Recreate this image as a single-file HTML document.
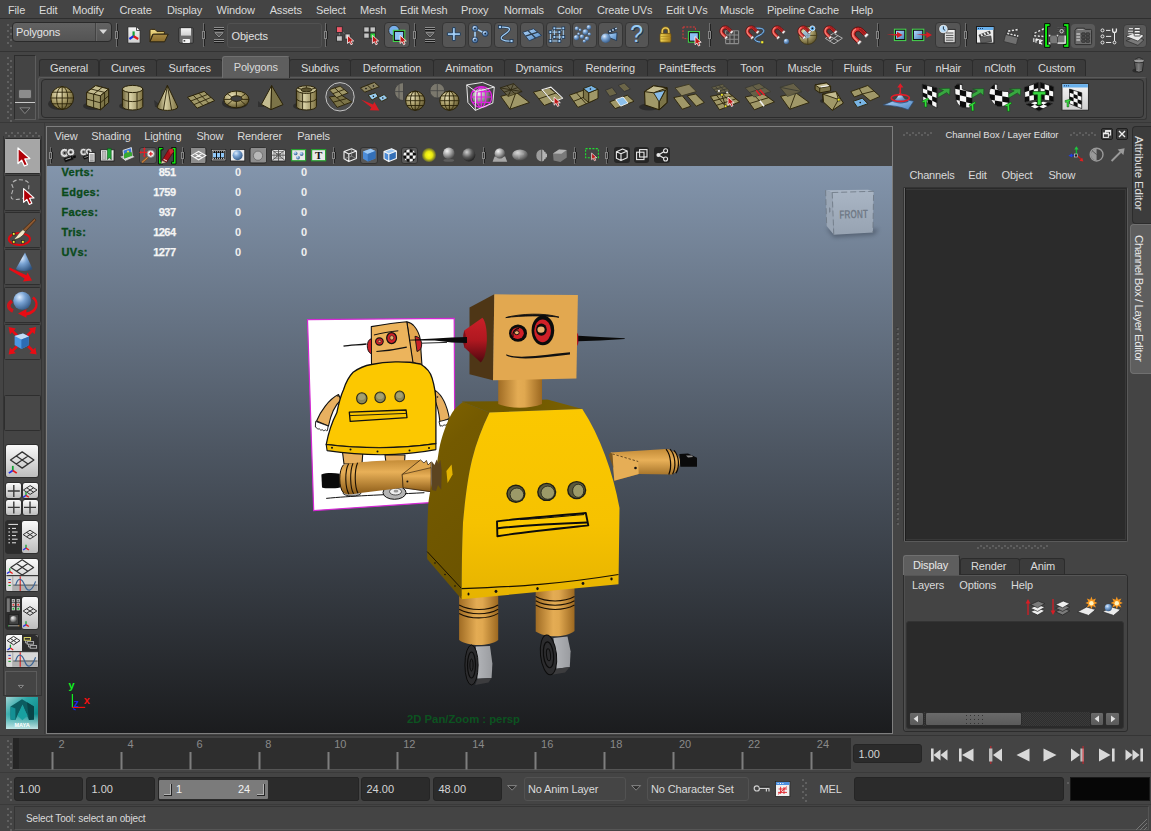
<!DOCTYPE html>
<html><head><meta charset="utf-8">
<style>
*{box-sizing:border-box;margin:0;padding:0}
html,body{width:1151px;height:831px;overflow:hidden;background:#444;font-family:"Liberation Sans",sans-serif;font-size:11px;color:#d8d8d8}
.a{position:absolute}
.t{position:absolute;white-space:nowrap;color:#dadada;font-size:11px;line-height:13px;letter-spacing:-0.15px}
.fld{position:absolute;background:#2b2b2b;border:1px solid #252525;border-radius:3px;color:#d4d4d4;font-size:11px;line-height:13px;white-space:nowrap}
.tab{position:absolute;top:59px;height:17px;background:#3b3b3b;border:1px solid #2c2c2c;border-bottom:none;border-radius:3px 3px 0 0;color:#dadada;font-size:11px;line-height:13px;text-align:center;padding-top:3px;letter-spacing:-0.15px}
.btn{position:absolute;background:#515151;border-radius:3px;border:1px solid #3a3a3a}
.hud{position:absolute;font-weight:bold;font-size:11px;line-height:12px;white-space:nowrap}
svg{position:absolute;overflow:visible}
</style></head>
<body>
<!-- menubar -->
<div class="a" style="left:0;top:0;width:1151px;height:19px;background:#444;border-bottom:1px solid #2e2e2e"></div>
<div class="t" style="left:8px;top:4px">File</div>
<div class="t" style="left:39px;top:4px">Edit</div>
<div class="t" style="left:72.3px;top:4px">Modify</div>
<div class="t" style="left:119.5px;top:4px">Create</div>
<div class="t" style="left:167px;top:4px">Display</div>
<div class="t" style="left:216.5px;top:4px">Window</div>
<div class="t" style="left:269.7px;top:4px">Assets</div>
<div class="t" style="left:316px;top:4px">Select</div>
<div class="t" style="left:360px;top:4px">Mesh</div>
<div class="t" style="left:400px;top:4px">Edit Mesh</div>
<div class="t" style="left:461px;top:4px">Proxy</div>
<div class="t" style="left:504px;top:4px">Normals</div>
<div class="t" style="left:557px;top:4px">Color</div>
<div class="t" style="left:597px;top:4px">Create UVs</div>
<div class="t" style="left:666px;top:4px">Edit UVs</div>
<div class="t" style="left:720px;top:4px">Muscle</div>
<div class="t" style="left:767px;top:4px">Pipeline Cache</div>
<div class="t" style="left:851px;top:4px">Help</div>

<!-- status -->
<div class="a" style="left:0;top:51px;width:1151px;height:1px;background:#333"></div>
<div class="a" style="left:7px;top:24px;width:2px;height:2px;background:#606060"></div><div class="a" style="left:10px;top:27px;width:2px;height:2px;background:#606060"></div><div class="a" style="left:7px;top:30px;width:2px;height:2px;background:#606060"></div><div class="a" style="left:10px;top:33px;width:2px;height:2px;background:#606060"></div><div class="a" style="left:7px;top:36px;width:2px;height:2px;background:#606060"></div><div class="a" style="left:10px;top:39px;width:2px;height:2px;background:#606060"></div><div class="a" style="left:7px;top:42px;width:2px;height:2px;background:#606060"></div><div class="a" style="left:10px;top:45px;width:2px;height:2px;background:#606060"></div>
<div class="a" style="left:12px;top:22px;width:100px;height:20px;border:1px solid #2a2a2a;border-radius:4px;background:linear-gradient(#626262,#545454)"></div>
<div class="a" style="left:95px;top:23px;width:1px;height:18px;background:#424242"></div>
<div class="a" style="left:96px;top:23px;width:1px;height:18px;background:#686868"></div>
<svg style="left:99px;top:29px" width="9" height="6"><path d="M0.3,0.5 L8.2,0.5 L4.25,5 Z" fill="#d8d8d8"/></svg>
<div class="t" style="left:16px;top:25.5px;color:#e4e4e4">Polygons</div>
<div class="a" style="left:116px;top:23px;width:1px;height:24px;background:#6e6e6e"></div><div class="a" style="left:117px;top:24px;width:1px;height:22px;background:#222"></div><div class="a" style="left:115px;top:31px;width:4px;height:8px;background:#1e1e1e"></div><div class="a" style="left:115px;top:31px;width:3px;height:8px;border:1px solid #858585;background:#3a3a3a"></div>
<div class="a" style="left:203px;top:23px;width:1px;height:24px;background:#6e6e6e"></div><div class="a" style="left:204px;top:24px;width:1px;height:22px;background:#222"></div><div class="a" style="left:202px;top:31px;width:4px;height:8px;background:#1e1e1e"></div><div class="a" style="left:202px;top:31px;width:3px;height:8px;border:1px solid #858585;background:#3a3a3a"></div>
<div class="a" style="left:325px;top:23px;width:1px;height:24px;background:#6e6e6e"></div><div class="a" style="left:326px;top:24px;width:1px;height:22px;background:#222"></div><div class="a" style="left:324px;top:31px;width:4px;height:8px;background:#1e1e1e"></div><div class="a" style="left:324px;top:31px;width:3px;height:8px;border:1px solid #858585;background:#3a3a3a"></div>
<div class="a" style="left:414px;top:23px;width:1px;height:24px;background:#6e6e6e"></div><div class="a" style="left:415px;top:24px;width:1px;height:22px;background:#222"></div><div class="a" style="left:413px;top:31px;width:4px;height:8px;background:#1e1e1e"></div><div class="a" style="left:413px;top:31px;width:3px;height:8px;border:1px solid #858585;background:#3a3a3a"></div>
<div class="a" style="left:709px;top:23px;width:1px;height:24px;background:#6e6e6e"></div><div class="a" style="left:710px;top:24px;width:1px;height:22px;background:#222"></div><div class="a" style="left:708px;top:31px;width:4px;height:8px;background:#1e1e1e"></div><div class="a" style="left:708px;top:31px;width:3px;height:8px;border:1px solid #858585;background:#3a3a3a"></div>
<div class="a" style="left:877px;top:23px;width:1px;height:24px;background:#6e6e6e"></div><div class="a" style="left:878px;top:24px;width:1px;height:22px;background:#222"></div><div class="a" style="left:876px;top:31px;width:4px;height:8px;background:#1e1e1e"></div><div class="a" style="left:876px;top:31px;width:3px;height:8px;border:1px solid #858585;background:#3a3a3a"></div>
<div class="a" style="left:965px;top:23px;width:1px;height:24px;background:#6e6e6e"></div><div class="a" style="left:966px;top:24px;width:1px;height:22px;background:#222"></div><div class="a" style="left:964px;top:31px;width:4px;height:8px;background:#1e1e1e"></div><div class="a" style="left:964px;top:31px;width:3px;height:8px;border:1px solid #858585;background:#3a3a3a"></div>
<svg width="0" height="0" style="left:0;top:0"><defs>
<linearGradient id="gPage" x1="0" y1="0" x2="0" y2="1"><stop offset="0" stop-color="#f4f4f4"/><stop offset="1" stop-color="#d0d0d0"/></linearGradient>
<linearGradient id="gFold" x1="0" y1="0" x2="0" y2="1"><stop offset="0" stop-color="#f0dc88"/><stop offset="1" stop-color="#c8a84c"/></linearGradient>
<linearGradient id="gFold2" x1="0" y1="0" x2="0" y2="1"><stop offset="0" stop-color="#a88a44"/><stop offset="1" stop-color="#8a6c2c"/></linearGradient>
<radialGradient id="gBall" cx="0.35" cy="0.3" r="0.8"><stop offset="0" stop-color="#dcecff"/><stop offset="0.4" stop-color="#7aa4d4"/><stop offset="1" stop-color="#2c507c"/></radialGradient>
<radialGradient id="gGrey" cx="0.35" cy="0.3" r="0.8"><stop offset="0" stop-color="#f4f4f4"/><stop offset="0.5" stop-color="#9a9a9a"/><stop offset="1" stop-color="#3a3a3a"/></radialGradient>
<radialGradient id="gDark" cx="0.35" cy="0.3" r="0.8"><stop offset="0" stop-color="#d0d0d0"/><stop offset="0.5" stop-color="#5a5a5a"/><stop offset="1" stop-color="#161616"/></radialGradient>
<radialGradient id="gTan" cx="0.35" cy="0.3" r="0.8"><stop offset="0" stop-color="#e8e0b8"/><stop offset="0.5" stop-color="#a89c68"/><stop offset="1" stop-color="#544a24"/></radialGradient>
<linearGradient id="gTanL" x1="0" y1="0" x2="1" y2="0"><stop offset="0" stop-color="#6c6238"/><stop offset="0.4" stop-color="#d8d0a4"/><stop offset="1" stop-color="#7c7040"/></linearGradient>
<linearGradient id="gTanT" x1="0" y1="0" x2="1" y2="1"><stop offset="0" stop-color="#d0c894"/><stop offset="1" stop-color="#7c7040"/></linearGradient>
<linearGradient id="gBlueL" x1="0" y1="0" x2="1" y2="1"><stop offset="0" stop-color="#b4d8fc"/><stop offset="1" stop-color="#4c84c0"/></linearGradient>
<linearGradient id="gYel" x1="0" y1="0" x2="1" y2="0"><stop offset="0" stop-color="#f8dc58"/><stop offset="1" stop-color="#a87c18"/></linearGradient>
<g id="cur" transform="scale(0.86)"><path d="M0,0 L0,9.5 L2.3,7.4 L4,11 L5.8,10.2 L4.2,6.8 L7.2,6.6 Z" fill="#c01818" stroke="#fff" stroke-width="0.9" stroke-linejoin="round"/></g>
<g id="magnet"><g transform="translate(6.2,6.2) rotate(-45)"><path d="M-5.4,5.6 L-5.4,0 A5.4,5.4 0 0 1 5.4,0 L5.4,5.6 L2.3,5.6 L2.3,0 A2.3,2.3 0 0 0 -2.3,0 L-2.3,5.6 Z" fill="#d83030" stroke="#5c0c0c" stroke-width="0.7"/><path d="M-4.2,4 L-4.2,0 A4.2,4.2 0 0 1 1.5,-3.9" fill="none" stroke="#ff9c8c" stroke-width="1.3" opacity="0.75"/><path d="M3,-2.2 A3.8,3.8 0 0 1 3.9,0 L3.9,4" fill="none" stroke="#7c1010" stroke-width="1.6" opacity="0.6"/><path d="M-5.4,4.2 H-2.3 V6.2 H-5.4Z M5.4,4.2 H2.3 V6.2 H5.4Z" fill="#f4f4f4" stroke="#666" stroke-width="0.5"/></g></g>
<g id="clap"><path d="M1,7 L15,4 L15.6,7 L1.8,10.2Z" fill="#444" stroke="#222" stroke-width="0.6"/><path d="M3,6.6 l2,-0.4 l1,2.6 l-2,0.5z M7,5.7 l2,-0.4 l1,2.6 l-2,0.5z M11,4.9 l2,-0.4 l1,2.6 l-2,0.5z" fill="#e8e8e8"/><path d="M2,10.2 L15.6,10.2 L15.6,17.5 L2,17.5Z" fill="#5c5c5c" stroke="#222" stroke-width="0.7"/></g>
</defs></svg>
<svg style="left:127px;top:26px" width="14" height="18" viewBox="0 0 14 18"><path d="M0.8,0.8 L9.5,0.8 L13.2,4.5 L13.2,17.2 L0.8,17.2 Z" fill="url(#gPage)" stroke="#2a2a2a" stroke-width="1"/><path d="M9.5,0.8 L9.5,4.5 L13.2,4.5Z" fill="#fff" stroke="#2a2a2a" stroke-width="0.8"/><path d="M6.6,10.2 L6.6,5.4" stroke="#18a038" stroke-width="2.2"/><path d="M6.6,10.2 L2.4,13" stroke="#1830e0" stroke-width="2.2"/><path d="M6.6,10.2 L11.2,13" stroke="#e01818" stroke-width="2.2"/></svg>
<svg style="left:149px;top:28px" width="20" height="15" viewBox="0 0 20 15"><path d="M1,13.6 L1,2.6 Q1,1.4 2.2,1.4 L6,1.4 L8,3.6 L15.4,3.6 L15.4,6 L3.5,6.4 Z" fill="url(#gFold)" stroke="#3a2c10" stroke-width="1"/><path d="M1,13.8 L4.2,6.2 L19.2,6.2 L15.6,13.8 Z" fill="url(#gFold2)" stroke="#2c2410" stroke-width="1"/></svg>
<svg style="left:178px;top:27px" width="16" height="17" viewBox="0 0 16 17"><path d="M1.6,0.8 L14.4,0.8 Q15.2,0.8 15.2,1.6 L15.2,15.4 Q15.2,16.2 14.4,16.2 L2.4,16.2 L0.8,14.6 L0.8,1.6 Q0.8,0.8 1.6,0.8Z" fill="#6a6a6a" stroke="#2a2a2a" stroke-width="1"/><rect x="3" y="1.2" width="10" height="7.4" fill="url(#gPage)"/><rect x="4.6" y="12" width="7.4" height="4" rx="0.8" fill="#f0f0f0"/><rect x="5.6" y="13" width="1.6" height="1.6" fill="#444"/></svg>
<svg style="left:213px;top:26px" width="12" height="18" viewBox="0 0 12 18"><path d="M1,1.5H11M1,3.5H11M1,13.5H11M1,15.5H11" stroke="#8c8c8c" stroke-width="1"/><path d="M1,2.5H11M1,4.5H11M1,14.5H11M1,16.5H11" stroke="#1c1c1c" stroke-width="1"/><path d="M0.4,6 L11.6,6 L6,12Z" fill="#222"/><path d="M1.8,6.6 L10.2,6.6 L6,11Z" fill="#585858" stroke="#9a9a9a" stroke-width="0.9"/></svg>
<svg style="left:424px;top:26px" width="12" height="18" viewBox="0 0 12 18"><path d="M1,1.5H11M1,3.5H11M1,13.5H11M1,15.5H11" stroke="#8c8c8c" stroke-width="1"/><path d="M1,2.5H11M1,4.5H11M1,14.5H11M1,16.5H11" stroke="#1c1c1c" stroke-width="1"/><path d="M0.4,6 L11.6,6 L6,12Z" fill="#222"/><path d="M1.8,6.6 L10.2,6.6 L6,11Z" fill="#585858" stroke="#9a9a9a" stroke-width="0.9"/></svg>
<div class="a" style="left:227px;top:23px;width:95px;height:25px;border:1px solid #515151;border-radius:3px;background:#454545"></div>
<div class="t" style="left:231.5px;top:30px;color:#e0e0e0">Objects</div>
<svg style="left:335px;top:25px" width="20" height="21" viewBox="0 0 20 21"><path d="M4.4,7 V11 M7,6.5 L11,10" stroke="#777" stroke-width="1"/><rect x="1.5" y="1.7" width="5.8" height="5.8" fill="#f05868" stroke="#2a2a2a" stroke-width="0.9"/><rect x="1.5" y="10.8" width="5.8" height="5.4" fill="#c4c4c4" stroke="#2a2a2a" stroke-width="0.9"/><rect x="10" y="8.9" width="5.2" height="5.2" fill="#c4c4c4" stroke="#2a2a2a" stroke-width="0.9"/><use href="#cur" x="12.5" y="10.3"/></svg>
<svg style="left:363px;top:25px" width="20" height="21" viewBox="0 0 20 21"><rect x="0.8" y="1.9" width="5.4" height="5.2" fill="#c4c4c4" stroke="#2a2a2a" stroke-width="0.9"/><rect x="7" y="1.9" width="5.4" height="5.2" fill="#c4c4c4" stroke="#2a2a2a" stroke-width="0.9"/><rect x="0.8" y="8" width="5.4" height="5.2" fill="#c4c4c4" stroke="#2a2a2a" stroke-width="0.9"/><rect x="7" y="8" width="5.4" height="5.2" fill="#30d040" stroke="#2a2a2a" stroke-width="0.9"/><use href="#cur" x="9.4" y="10.3"/></svg>
<div class="a" style="left:384px;top:22px;width:26px;height:26px;border:1px solid #343434;border-radius:4px;background:#555"></div>
<svg style="left:384px;top:22px" width="26" height="26" viewBox="0 0 26 26"><circle cx="10" cy="8.6" r="5.3" fill="#78b0ec" stroke="#2a2a2a" stroke-width="0.9"/><rect x="9.3" y="8.3" width="11.5" height="11.2" fill="#141414" stroke="#40d848" stroke-width="1"/><rect x="11" y="10" width="8.1" height="7.8" fill="#8cc0f4"/><use href="#cur" x="16.1" y="13.3"/></svg>
<div class="a" style="left:441.8px;top:22.4px;width:24.4px;height:25.2px;border:1px solid #363636;border-radius:4px;background:#555"></div>
<div class="a" style="left:467.9px;top:22.4px;width:24.4px;height:25.2px;border:1px solid #363636;border-radius:4px;background:#555"></div>
<div class="a" style="left:494px;top:22.4px;width:24.4px;height:25.2px;border:1px solid #363636;border-radius:4px;background:#555"></div>
<div class="a" style="left:520.1px;top:22.4px;width:24.4px;height:25.2px;border:1px solid #363636;border-radius:4px;background:#555"></div>
<div class="a" style="left:546.2px;top:22.4px;width:24.4px;height:25.2px;border:1px solid #363636;border-radius:4px;background:#555"></div>
<div class="a" style="left:572.3px;top:22.4px;width:24.4px;height:25.2px;border:1px solid #363636;border-radius:4px;background:#555"></div>
<div class="a" style="left:598.4px;top:22.4px;width:24.4px;height:25.2px;border:1px solid #363636;border-radius:4px;background:#555"></div>
<div class="a" style="left:624.5px;top:22.4px;width:24.4px;height:25.2px;border:1px solid #363636;border-radius:4px;background:#555"></div>
<svg style="left:441.8px;top:22.4px" width="24.4" height="25.2" viewBox="0 0 24.4 25.2"><path d="M10.6,5.6h2.6v5.2h5.2v2.6h-5.2v5.2h-2.6v-5.2h-5.2v-2.6h5.2z" fill="#a4d0f8" stroke="#1c3450" stroke-width="0.9"/></svg>
<svg style="left:467.9px;top:22.4px" width="24.4" height="25.2" viewBox="0 0 24.4 25.2"><path d="M7,6.4V18M7,6.4L17.2,11.5" stroke="#a4d0f8" stroke-width="1.6"/><circle cx="7" cy="6.4" r="3" fill="url(#gBall)" stroke="#1c3450" stroke-width="0.7"/><circle cx="17.2" cy="11.5" r="3" fill="url(#gBall)" stroke="#1c3450" stroke-width="0.7"/><circle cx="7" cy="17.9" r="3" fill="url(#gBall)" stroke="#1c3450" stroke-width="0.7"/><circle cx="7" cy="6.4" r="0.9" fill="#123"/><circle cx="17.2" cy="11.5" r="0.9" fill="#123"/><circle cx="7" cy="17.9" r="0.9" fill="#123"/></svg>
<svg style="left:494px;top:22.4px" width="24.4" height="25.2" viewBox="0 0 24.4 25.2"><path d="M6,5.2 C22,4 14,10.5 9,13.5 C4,17 10,19.5 17.2,19.2" fill="none" stroke="#1c3450" stroke-width="2.4"/><path d="M6,5.2 C22,4 14,10.5 9,13.5 C4,17 10,19.5 17.2,19.2" fill="none" stroke="#a4d0f8" stroke-width="1.2"/><rect x="4.4" y="3.6" width="3" height="3" fill="#a4d0f8" stroke="#1c3450" stroke-width="0.8"/><rect x="16" y="17.6" width="3" height="3" fill="#a4d0f8" stroke="#1c3450" stroke-width="0.8"/></svg>
<svg style="left:520.1px;top:22.4px" width="24.4" height="25.2" viewBox="0 0 24.4 25.2"><path d="M2.6,10.4 L13.6,6.8 L21.6,13.4 L9.2,18.8Z" fill="url(#gBlueL)" stroke="#1c3450" stroke-width="0.8"/><path d="M8,8.6 L15.6,16 M5.6,14.2 L17.8,10.2" stroke="#2c3c4c" stroke-width="1.3"/></svg>
<svg style="left:546.2px;top:22.4px" width="24.4" height="25.2" viewBox="0 0 24.4 25.2"><path d="M8.4,6.3H17.3V15H8.4ZM4.4,10.1H13.4V19H4.4ZM4.4,10.1L8.4,6.3M13.4,10.1L17.3,6.3M13.4,19L17.3,15M4.4,19L8.4,15" fill="none" stroke="#a4d0f8" stroke-width="1"/><rect x="7" y="4.9" width="2.8" height="2.8" fill="#a4d0f8" stroke="#1c3450" stroke-width="0.8"/><rect x="15.9" y="4.9" width="2.8" height="2.8" fill="#a4d0f8" stroke="#1c3450" stroke-width="0.8"/><rect x="3" y="8.7" width="2.8" height="2.8" fill="#a4d0f8" stroke="#1c3450" stroke-width="0.8"/><rect x="12" y="8.7" width="2.8" height="2.8" fill="#a4d0f8" stroke="#1c3450" stroke-width="0.8"/><rect x="7" y="13.6" width="2.8" height="2.8" fill="#a4d0f8" stroke="#1c3450" stroke-width="0.8"/><rect x="15.9" y="13.6" width="2.8" height="2.8" fill="#a4d0f8" stroke="#1c3450" stroke-width="0.8"/><rect x="3" y="17.6" width="2.8" height="2.8" fill="#a4d0f8" stroke="#1c3450" stroke-width="0.8"/><rect x="12" y="17.6" width="2.8" height="2.8" fill="#a4d0f8" stroke="#1c3450" stroke-width="0.8"/></svg>
<svg style="left:572.3px;top:22.4px" width="24.4" height="25.2" viewBox="0 0 24.4 25.2"><circle cx="4.8" cy="6.6" r="2" fill="url(#gBall)"/><circle cx="16.9" cy="5.4" r="2.3" fill="url(#gBall)"/><circle cx="8.2" cy="8" r="1.4" fill="url(#gBall)"/><circle cx="13.4" cy="10" r="2.8" fill="url(#gBall)"/><circle cx="6.6" cy="12" r="1.4" fill="url(#gBall)"/><circle cx="17.4" cy="12.2" r="1.6" fill="url(#gBall)"/><circle cx="4.4" cy="15.6" r="2.6" fill="url(#gBall)"/><circle cx="10" cy="14.6" r="2.2" fill="url(#gBall)"/><circle cx="15" cy="16.6" r="2.2" fill="url(#gBall)"/><circle cx="12.4" cy="19.2" r="1.6" fill="url(#gBall)"/></svg>
<svg style="left:598.4px;top:22.4px" width="24.4" height="25.2" viewBox="0 0 24.4 25.2"><path d="M9.6,9 L18.4,5 L19.4,7.6 L10.6,11.6Z" fill="#1c3450"/><path d="M11,8.9l1.4,-0.6l0.6,1.4l-1.4,0.6z M14,7.6l1.4,-0.6l0.6,1.4l-1.4,0.6z M17,6.2l1.4,-0.6l0.6,1.4l-1.4,0.6z" fill="#d8ecff"/><path d="M10.4,12 L19,10.6 L18.6,18.6 L11,15.6Z" fill="url(#gBlueL)" stroke="#1c3450" stroke-width="0.8"/><circle cx="7.8" cy="16.2" r="4.8" fill="url(#gBall)"/></svg>
<div class="a" style="left:624.5px;top:22px;width:24.4px;text-align:center;font-weight:normal;font-size:23px;line-height:25px;color:#98ccf4;text-shadow:1px 1px 0 #1c3450">?</div>
<svg style="left:659px;top:26px" width="13" height="17" viewBox="0 0 13 17"><path d="M3.2,8 V5.2 A3.3,3.3 0 0 1 9.8,5.2 V8" fill="none" stroke="#8c6c14" stroke-width="2.6"/><path d="M3.2,8 V5.2 A3.3,3.3 0 0 1 9.8,5.2 V8" fill="none" stroke="#f0d060" stroke-width="1.2"/><rect x="1" y="7.6" width="11" height="8.6" rx="1" fill="url(#gYel)" stroke="#6c5010" stroke-width="0.8"/><path d="M1.6,10.4H11.6M1.6,13H11.6" stroke="#a88420" stroke-width="0.7"/></svg>
<svg style="left:682px;top:25px" width="21" height="21" viewBox="0 0 21 21"><rect x="1" y="2" width="12.4" height="11.6" fill="none" stroke="#e03838" stroke-width="1" stroke-dasharray="2 1.3"/><rect x="6.4" y="6.6" width="11" height="10.6" fill="#141414" stroke="#40d848" stroke-width="1"/><rect x="8" y="8.2" width="7.8" height="7.4" fill="#8cc0f4"/><use href="#cur" x="13" y="11.6"/></svg>
<svg style="left:718.9px;top:25.3px" width="22" height="22" viewBox="0 0 22 22"><path d="M6.6,5.7H19.6M6.6,10H19.6M6.6,14.3H19.6M6.6,18.6H19.6M6.6,5.7V18.6M10.9,5.7V18.6M15.2,5.7V18.6M19.6,5.7V18.6" stroke="#8c8c8c" stroke-width="1.1" fill="none"/><use href="#magnet"/></svg>
<svg style="left:745px;top:25.3px" width="22" height="22" viewBox="0 0 22 22"><path d="M10,3.4 C22,2 20,8 14,10.5 C8,13 8,16.5 16.6,17.2" fill="none" stroke="#2c5078" stroke-width="2"/><path d="M10,3.4 C22,2 20,8 14,10.5 C8,13 8,16.5 16.6,17.2" fill="none" stroke="#8cc4f4" stroke-width="1"/><rect x="15.8" y="15.8" width="3" height="3" fill="#f4ec30" stroke="#333" stroke-width="0.7"/><use href="#magnet"/></svg>
<svg style="left:770.8px;top:25.3px" width="22" height="22" viewBox="0 0 22 22"><circle cx="15.4" cy="16.4" r="2.6" fill="url(#gBall)"/><use href="#magnet"/></svg>
<svg style="left:796.9px;top:25.3px" width="22" height="22" viewBox="0 0 22 22"><circle cx="10.8" cy="10.4" r="9" fill="url(#gTan)" stroke="#3c3414" stroke-width="0.8"/><path d="M1.8,10.4H19.8M10.8,1.4V19.4" stroke="#3c3414" stroke-width="0.8"/><circle cx="9.6" cy="9.6" r="3.8" fill="#8cb4d8" opacity="0.8"/><circle cx="15.4" cy="3.4" r="2.5" fill="#58b0f4" stroke="#e8f4ff" stroke-width="0.8"/><circle cx="15.4" cy="3.4" r="0.9" fill="#111"/><use href="#magnet"/></svg>
<svg style="left:822.9px;top:25.3px" width="22" height="22" viewBox="0 0 22 22"><path d="M2.4,13.4 L10.6,8.2 L19.4,13.2 L11,18.8Z M6.4,10.8L15.2,16 M6.6,16.2L15,10.6" fill="none" stroke="#b0b0b0" stroke-width="1"/><use href="#magnet"/></svg>
<svg style="left:850px;top:25.5px" width="22" height="22" viewBox="0 0 22 22"><use href="#magnet" transform="scale(1.3)"/></svg>
<svg style="left:886px;top:28px" width="22" height="14" viewBox="0 0 22 14"><rect x="8.4" y="1.2" width="11.4" height="11.4" fill="#141414" stroke="#48d850" stroke-width="1"/><rect x="10" y="2.8" width="8.2" height="8.2" fill="url(#gBlueL)"/><path d="M0.6,6.6 L11,6.1 L11,3.8 L16.6,6.9 L11,10 L11,7.7Z" fill="#d81c24"/></svg>
<svg style="left:911px;top:28px" width="22" height="14" viewBox="0 0 22 14"><rect x="1.4" y="1.2" width="11.4" height="11.4" fill="#141414" stroke="#48d850" stroke-width="1"/><rect x="3" y="2.8" width="8.2" height="8.2" fill="url(#gBlueL)"/><path d="M5,6.6 L15.4,6.1 L15.4,3.8 L21,6.9 L15.4,10 L15.4,7.7Z" fill="#d81c24"/></svg>
<div class="a" style="left:935.4px;top:22.4px;width:25.3px;height:25.2px;border:1px solid #363636;border-radius:4px;background:#555"></div>
<svg style="left:935.4px;top:22.4px" width="25.3" height="25.2" viewBox="0 0 25.3 25.2"><rect x="9.2" y="7.4" width="11" height="13.4" fill="url(#gPage)" stroke="#222" stroke-width="0.9"/><path d="M11,11H18.4M11,13.4H18.4M11,15.8H18.4M11,18.2H18.4" stroke="#444" stroke-width="0.9"/><circle cx="8.4" cy="7" r="4" fill="#b8dcf8" stroke="#e8e8e8" stroke-width="1"/><circle cx="8.4" cy="7" r="4.6" fill="none" stroke="#333" stroke-width="0.5"/><path d="M8.4,4.4V7.2L10.2,8.4" stroke="#123" stroke-width="0.9" fill="none"/></svg>
<svg style="left:976.4px;top:26px" width="18.4" height="17.6" viewBox="0 0 18.4 17.6"><rect x="0.5" y="0.5" width="17.4" height="16.6" fill="#ececec" stroke="#1c1c1c" stroke-width="1"/><rect x="1" y="1" width="16.4" height="3" fill="#68b0ec"/><path d="M2,2.5h1M4,2.5h1M6,2.5h1" stroke="#1c3c6c" stroke-width="1"/><g transform="translate(2.4,2.6) scale(0.8) rotate(-8 8 10)"><use href="#clap"/></g></svg>
<svg style="left:1003px;top:23px" width="20" height="22" viewBox="0 0 20 22"><g transform="translate(1.5,2.5) rotate(14 8 10)"><path d="M0.5,6.5 L12.6,1.4 L13.6,3.6 L1.4,8.8Z" fill="#3a3a3a"/><path d="M2.4,6 l2,-0.85 l0.7,1.5 l-2,0.85z M5.8,4.6 l2,-0.85 l0.7,1.5 l-2,0.85z M9.2,3.2 l2,-0.85 l0.7,1.5 l-2,0.85z" fill="#e4e4e4"/><path d="M1,8 H14 V10.6 H1Z" fill="#3a3a3a"/><path d="M2.4,8.4h2v1.7h-2z M5.8,8.4h2v1.7h-2z M9.2,8.4h2v1.7h-2z M12.4,8.4h1.4v1.7h-1.4z" fill="#e4e4e4"/><path d="M1,10.6 H14 V18 H1Z" fill="#707070" stroke="#333" stroke-width="0.7"/></g></svg>
<svg style="left:1031px;top:25px" width="14" height="20" viewBox="0 0 14 20"><path d="M1.4,7.8 L12.6,2.4 L13,4.6 L1.8,10Z" fill="#3a3a3a"/><path d="M3.4,7.4l2,-0.95l0.4,1.4l-2,0.95z M7,5.7l2,-0.95l0.4,1.4l-2,0.95z M10.6,4l2,-0.95l0.4,1.4l-2,0.95z" fill="#e4e4e4"/><path d="M1.6,9.6 L13,10.6 V12.8 L1.6,11.8Z" fill="#3a3a3a"/><path d="M3.2,10l2,.2v1.5l-2,-.2z M6.8,10.3l2,.2v1.5l-2,-.2z M10.4,10.6l2,.2v1.5l-2,-.2z" fill="#e4e4e4"/><path d="M1.4,12 L13,14 V20.6 L1,17.4Z" fill="#4a4a4a"/><path d="M2.8,13.2V17M5,13.8V17.8M5,13.8L7.2,14.6L5,15.8M8.6,14.8V19M8.6,14.8L11,15.6L8.6,17L11.2,19.4" stroke="#f0f0f0" stroke-width="1.1" fill="none"/></svg>
<svg style="left:1044.2px;top:23.4px" width="6.6" height="25" viewBox="0 0 6.6 25"><path d="M0.6,0.6 H6 V3.4 H3.5 V21.6 H6 V24.4 H0.6Z" fill="#10f010" stroke="#0a0a0a" stroke-width="1"/></svg>
<svg style="left:1063.4px;top:23.4px" width="6.6" height="25" viewBox="0 0 6.6 25"><path d="M0.6,0.6 H6 V3.4 H3.5 V21.6 H6 V24.4 H0.6Z" fill="#10f010" stroke="#0a0a0a" stroke-width="1" transform="translate(6.6,0) scale(-1,1)"/></svg>
<svg style="left:1048px;top:26px" width="19" height="20" viewBox="0 0 19 20"><rect x="9.6" y="1.6" width="8" height="7.6" fill="#3a3a3a"/><path d="M9.6,1.6h8M9.6,3.5h8M9.6,5.4h8M9.6,7.3h8" stroke="#666" stroke-width="0.9" stroke-dasharray="1 1"/><circle cx="13.6" cy="5.2" r="1.7" fill="none" stroke="#e0e0e0" stroke-width="0.9"/><rect x="1.6" y="9.6" width="15.6" height="7.6" fill="#787878"/><path d="M9.5,9.6V17.2" stroke="#444" stroke-width="1"/><path d="M17.2,9.6V17.2H9.5" stroke="#f4f4f4" stroke-width="1.2" fill="none"/><path d="M1.6,9.6V17.2" stroke="#333" stroke-width="1"/><rect x="0.4" y="8.4" width="2.4" height="2.4" fill="#ddd" stroke="#444" stroke-width="0.6"/><rect x="8.3" y="8.4" width="2.4" height="2.4" fill="#ddd" stroke="#444" stroke-width="0.6"/><rect x="0.4" y="16" width="2.4" height="2.4" fill="#ddd" stroke="#444" stroke-width="0.6"/></svg>
<div class="a" style="left:1070.9px;top:23.6px;width:24.5px;height:24.3px;border-radius:4px;background:#5a5a5a"></div>
<svg style="left:1070.9px;top:23.6px" width="24.5" height="24.3" viewBox="0 0 24.5 24.3"><path d="M4,6.4 L5.6,4.2 H13.4 L14.4,5.4 H19.6 Q20.6,5.4 20.6,6.4 V19.6 Q20.6,20.6 19.6,20.6 H5 Q4,20.6 4,19.6Z" fill="#6e6e6e" stroke="#2e2e2e" stroke-width="1"/><path d="M6.4,5.4H12.6" stroke="#aaa" stroke-width="1"/><path d="M5.4,10H9M5.4,13H9M5.4,16H9" stroke="#e8e8e8" stroke-width="1.1"/><g fill="#4a4a4a" stroke="#2e2e2e" stroke-width="0.7"><rect x="10.6" y="8.8" width="3.6" height="2.8" rx="0.6"/><rect x="15" y="8.8" width="3.6" height="2.8" rx="0.6"/><rect x="10.6" y="12.2" width="3.6" height="2.8" rx="0.6"/><rect x="15" y="12.2" width="3.6" height="2.8" rx="0.6"/><rect x="10.6" y="15.6" width="3.6" height="2.8" rx="0.6"/><rect x="15" y="15.6" width="3.6" height="2.8" rx="0.6"/></g></svg>
<svg style="left:1099px;top:26px" width="20" height="20" viewBox="0 0 20 20"><g fill="none" stroke="#e8e8e8" stroke-width="1"><circle cx="3.5" cy="4.4" r="1.5"/><circle cx="3.5" cy="10.4" r="1.5"/><circle cx="3.5" cy="16.5" r="1.5"/><path d="M7,4.4H11.4M7,10.4H12.2M7,16.5H12.2"/><path d="M15.5,15V6.4"/><circle cx="15.5" cy="16.5" r="1.4"/><path d="M13.6,2.4 V4.6 A1.9,1.9 0 0 0 17.4,4.6 V2.4" stroke-width="1.3"/></g></svg>
<div class="a" style="left:1122.7px;top:23.6px;width:24.6px;height:24.3px;border-radius:4px;background:#5a5a5a;border:1px solid #3c3c3c"></div>
<svg style="left:1122.7px;top:23.6px" width="24.6" height="24.3" viewBox="0 0 24.6 24.3"><path d="M3,16.6 L13.4,12.4 L21,15.8 L15,21.4Z" fill="#7a7a7a" stroke="#2e2e2e" stroke-width="0.8"/><path d="M3,12.4 L13.4,8 L21,11.6 L15,17.2Z" fill="#e8e8e8" stroke="#2e2e2e" stroke-width="0.8"/><path d="M6,4.6H10M5,7.2H10M5.4,9.8H10M4.4,12.4H10" stroke="#e8e8e8" stroke-width="1"/><g fill="#f4f4f4" stroke="#2a2a2a" stroke-width="0.8"><rect x="11.2" y="3.4" width="6" height="2.6" rx="0.6"/><rect x="11.2" y="6.4" width="6" height="2.6" rx="0.6"/><rect x="11.2" y="9.4" width="6" height="2.6" rx="0.6"/></g></svg>

<!-- shelf -->
<div class="a" style="left:7px;top:57px;width:2px;height:2px;background:#606060"></div>
<div class="a" style="left:10px;top:60px;width:2px;height:2px;background:#606060"></div>
<div class="a" style="left:7px;top:63px;width:2px;height:2px;background:#606060"></div>
<div class="a" style="left:10px;top:66px;width:2px;height:2px;background:#606060"></div>
<div class="a" style="left:7px;top:69px;width:2px;height:2px;background:#606060"></div>
<div class="a" style="left:10px;top:72px;width:2px;height:2px;background:#606060"></div>
<div class="a" style="left:7px;top:75px;width:2px;height:2px;background:#606060"></div>
<div class="a" style="left:10px;top:78px;width:2px;height:2px;background:#606060"></div>
<div class="a" style="left:7px;top:81px;width:2px;height:2px;background:#606060"></div>
<div class="a" style="left:10px;top:84px;width:2px;height:2px;background:#606060"></div>
<div class="a" style="left:7px;top:87px;width:2px;height:2px;background:#606060"></div>
<div class="a" style="left:10px;top:90px;width:2px;height:2px;background:#606060"></div>
<div class="a" style="left:7px;top:93px;width:2px;height:2px;background:#606060"></div>
<div class="a" style="left:10px;top:96px;width:2px;height:2px;background:#606060"></div>
<div class="a" style="left:7px;top:99px;width:2px;height:2px;background:#606060"></div>
<div class="a" style="left:10px;top:102px;width:2px;height:2px;background:#606060"></div>
<div class="a" style="left:7px;top:105px;width:2px;height:2px;background:#606060"></div>
<div class="a" style="left:10px;top:108px;width:2px;height:2px;background:#606060"></div>
<div class="a" style="left:7px;top:111px;width:2px;height:2px;background:#606060"></div>
<div class="a" style="left:10px;top:114px;width:2px;height:2px;background:#606060"></div>
<div class="a" style="left:7px;top:117px;width:2px;height:2px;background:#606060"></div>
<div class="a" style="left:10px;top:120px;width:2px;height:2px;background:#606060"></div>
<div class="a" style="left:14px;top:55px;width:22px;height:65px;border:1px solid #2c2c2c;border-right-color:#5e5e5e;border-bottom-color:#5e5e5e;background:#444"></div>
<div class="a" style="left:18px;top:89px;width:14px;height:10px;border-radius:2px;background:#8c8c8c;border:1px solid #4a4a4a"></div>
<div class="a" style="left:15px;top:102px;width:20px;height:1px;background:#c8c8c8"></div>
<svg style="left:19px;top:107px" width="12" height="8"><path d="M0.8,0.8 L11,0.8 L5.9,6.6Z" fill="#3c3c3c" stroke="#8a8a8a" stroke-width="0.9"/></svg>
<div class="tab" style="padding-top:2px;left:38.6px;width:60.9px">General</div>
<div class="tab" style="padding-top:2px;left:98.5px;width:58.9px">Curves</div>
<div class="tab" style="padding-top:2px;left:156.4px;width:66.6px">Surfaces</div>
<div class="tab" style="padding-top:2px;left:222px;width:67.5px;top:56px;height:22px;background:#5e5e5e;border-color:#707070 #2e2e2e #5e5e5e #707070;padding-top:4px;z-index:2">Polygons</div>
<div class="tab" style="padding-top:2px;left:289px;width:62px">Subdivs</div>
<div class="tab" style="padding-top:2px;left:350px;width:84px">Deformation</div>
<div class="tab" style="padding-top:2px;left:433px;width:72px">Animation</div>
<div class="tab" style="padding-top:2px;left:504px;width:70px">Dynamics</div>
<div class="tab" style="padding-top:2px;left:573px;width:74.5px">Rendering</div>
<div class="tab" style="padding-top:2px;left:646.5px;width:81.5px">PaintEffects</div>
<div class="tab" style="padding-top:2px;left:727px;width:50px">Toon</div>
<div class="tab" style="padding-top:2px;left:776px;width:57px">Muscle</div>
<div class="tab" style="padding-top:2px;left:832px;width:51.5px">Fluids</div>
<div class="tab" style="padding-top:2px;left:882.5px;width:42px">Fur</div>
<div class="tab" style="padding-top:2px;left:923.5px;width:49.5px">nHair</div>
<div class="tab" style="padding-top:2px;left:972px;width:56px">nCloth</div>
<div class="tab" style="padding-top:2px;left:1027px;width:59px">Custom</div>
<div class="a" style="left:38px;top:77px;width:1109px;height:43px;border:1px solid #5a5a5a;border-right-color:#353535;border-bottom-color:#353535;border-radius:3px;background:#484848"></div>
<div class="a" style="left:41px;top:79px;width:1103px;height:39px;border:1px solid #2c2c2c;border-radius:4px;background:#444"></div>
<svg style="left:1132px;top:56px" width="14" height="17" viewBox="0 0 14 17"><ellipse cx="5.4" cy="14.6" rx="5" ry="2" fill="#222" opacity="0.7"/><path d="M2.6,5.6 L3.6,15.2 Q7,16.6 10.4,15.2 L11.4,5.6Z" fill="url(#gTrash)" stroke="#1c1c1c" stroke-width="0.8"/><path d="M5,7V14.6M7,7V15M9,7V14.6" stroke="#3a3a3a" stroke-width="0.9"/><ellipse cx="7" cy="4.8" rx="5.4" ry="2" fill="#9c9c9c" stroke="#1c1c1c" stroke-width="0.8"/><path d="M5.2,3 Q7,1 8.8,3" fill="none" stroke="#1c1c1c" stroke-width="1.6"/><path d="M5.2,3 Q7,1.2 8.8,3" fill="none" stroke="#8a8a8a" stroke-width="0.7"/><defs><linearGradient id="gTrash" x1="0" y1="0" x2="1" y2="0"><stop offset="0" stop-color="#5a5a5a"/><stop offset="0.45" stop-color="#b4b4b4"/><stop offset="1" stop-color="#5a5a5a"/></linearGradient></defs></svg>
<svg style="left:45.8px;top:82px" width="32" height="32" viewBox="0 0 32 32"><ellipse cx="13" cy="22" rx="11" ry="6" fill="#262626" opacity="0.75"/><circle cx="16.2" cy="16" r="11.4" fill="url(#gTan)" stroke="#2a2208" stroke-width="1"/><path d="M16.2,4.6V27.4M4.8,16H27.6M6.4,10.2H26M6.4,21.8H26" stroke="#2a2208" stroke-width="0.9" fill="none"/><ellipse cx="16.2" cy="16" rx="5.6" ry="11.4" fill="none" stroke="#2a2208" stroke-width="0.9"/></svg>
<svg style="left:80.7px;top:82px" width="32" height="32" viewBox="0 0 32 32"><ellipse cx="12" cy="24" rx="10" ry="4" fill="#262626" opacity="0.75"/><path d="M5.6,10.4 L14.6,3.6 L27.6,7 L27.6,20.6 L19.4,27.8 L5.6,23.6Z" fill="#a09868" stroke="#2a2208" stroke-width="1"/><path d="M5.6,10.4 L14.6,3.6 L27.6,7 L19.4,13.8Z" fill="#c4bc90" stroke="#2a2208" stroke-width="1"/><path d="M19.4,13.8 L27.6,7 L27.6,20.6 L19.4,27.8Z" fill="#7c7448" stroke="#2a2208" stroke-width="1"/><path d="M10,7L23.6,10.4M12.6,12.2L21.2,5.4M12.6,12.2V25.8M5.6,17L19.4,20.8L27.6,13.8M23.6,10.4V24.2" stroke="#2a2208" stroke-width="0.9" fill="none"/></svg>
<svg style="left:115.6px;top:82px" width="32" height="32" viewBox="0 0 32 32"><ellipse cx="13" cy="24" rx="10" ry="4" fill="#262626" opacity="0.75"/><path d="M6.4,7 V24.4 A10.2,3.6 0 0 0 26.8,24.4 V7Z" fill="url(#gTanL)" stroke="#2a2208" stroke-width="1"/><ellipse cx="16.6" cy="7" rx="10.2" ry="3.6" fill="#c4bc90" stroke="#2a2208" stroke-width="1"/><path d="M6.4,16 A10.2,3.6 0 0 0 26.8,16M12.4,10.2V27.6M21,10.2V27.6" stroke="#2a2208" stroke-width="0.9" fill="none"/></svg>
<svg style="left:150.5px;top:82px" width="32" height="32" viewBox="0 0 32 32"><path d="M3,18 L12,25 L4,25Z" fill="#2a2a2a" opacity="0.7"/><path d="M16.4,3.4 L26.8,25 A10.4,3.4 0 0 1 6,25Z" fill="url(#gTanL)" stroke="#2a2208" stroke-width="1"/><path d="M16.4,3.4 L12.4,28M16.4,3.4L20.6,28" stroke="#2a2208" stroke-width="0.9" fill="none"/></svg>
<svg style="left:185.4px;top:82px" width="32" height="32" viewBox="0 0 32 32"><path d="M2.6,15.2 L19.2,9.4 L29.6,18.6 L12.2,26.2Z" fill="#a09868" stroke="#2a2208" stroke-width="1"/><path d="M8.2,13.2L18,23.6M13.8,11.2L23.8,21.2M5.8,19L22.6,12.4M9,22.6L26,15.4" stroke="#2a2208" stroke-width="0.9"/></svg>
<svg style="left:220.3px;top:82px" width="32" height="32" viewBox="0 0 32 32"><ellipse cx="15" cy="21" rx="13" ry="6" fill="#262626" opacity="0.75"/><ellipse cx="16.4" cy="17.4" rx="12.6" ry="8.4" fill="url(#gTan)" stroke="#2a2208" stroke-width="1"/><ellipse cx="16.4" cy="16.6" rx="5.6" ry="2.8" fill="#3f3f3f" stroke="#2a2208" stroke-width="1"/><path d="M16.4,9V13.8M16.4,19.4V25.8M3.8,17.4H10.8M22,17.4H29M7,11.6L11.8,15M25.8,11.6L21,15M7,23.2L12,18.6M25.8,23.2L20.8,18.6" stroke="#2a2208" stroke-width="0.9"/></svg>
<svg style="left:255.2px;top:82px" width="32" height="32" viewBox="0 0 32 32"><path d="M3,19 L10,25 L3,25Z" fill="#2a2a2a" opacity="0.7"/><path d="M16.6,3.6 L6.4,22.4 L16,27.6Z" fill="#c4bc90" stroke="#2a2208" stroke-width="1"/><path d="M16.6,3.6 L16,27.6 L28,22.6Z" fill="#7c7448" stroke="#2a2208" stroke-width="1"/></svg>
<svg style="left:290.1px;top:82px" width="32" height="32" viewBox="0 0 32 32"><ellipse cx="13" cy="24" rx="10" ry="4" fill="#262626" opacity="0.75"/><path d="M6.4,7.6 V24.4 A10,3.6 0 0 0 26.4,24.4 V7.6Z" fill="url(#gTanL)" stroke="#2a2208" stroke-width="1"/><ellipse cx="16.4" cy="7.6" rx="10" ry="3.8" fill="#c4bc90" stroke="#2a2208" stroke-width="1"/><ellipse cx="16.4" cy="7.8" rx="5.4" ry="2" fill="#5a5230" stroke="#2a2208" stroke-width="0.9"/><path d="M6.4,16.4 A10,3.6 0 0 0 26.4,16.4M12.4,10.6V27.8M20.6,10.6V27.8M16.4,3.8V5.8M7.6,6.2L11.6,7.2M25.2,6.2L21.2,7.2" stroke="#2a2208" stroke-width="0.9" fill="none"/></svg>
<svg style="left:325px;top:82px" width="32" height="32" viewBox="0 0 32 32"><circle cx="15" cy="14.8" r="14.2" fill="#4c4c4c" stroke="#c4c4c4" stroke-width="1"/><path d="M4.3,15 L16.5,13.2 L26.8,19.9 L12.2,25.4Z" fill="#7c7448" stroke="#2a2208" stroke-width="0.9" stroke-linejoin="round"/><path d="M10.4,14.1 L19.5,22.65" stroke="#2a2208" stroke-width="0.9"/><path d="M8.25,20.2 L21.65,16.55" stroke="#2a2208" stroke-width="0.9"/><path d="M4.3,7.7 L15.2,4.1 L23.2,10.8 L11.6,15.6Z" fill="#a09868" stroke="#2a2208" stroke-width="0.9" stroke-linejoin="round"/><path d="M9.75,5.9 L17.4,13.2" stroke="#2a2208" stroke-width="0.9"/><path d="M7.95,11.65 L19.2,7.45" stroke="#2a2208" stroke-width="0.9"/></svg>
<svg style="left:359.9px;top:82px" width="32" height="32" viewBox="0 0 32 32"><path d="M0.4,5.9 L14.4,0.4 L19.3,4.7 L4.7,10.2Z" fill="#8c8460" stroke="#2a2208" stroke-width="0.9" stroke-linejoin="round"/><path d="M7.4,3.15 L12,7.45" stroke="#2a2208" stroke-width="0.9"/><circle cx="6" cy="6.6" r="0.8" fill="#111"/><circle cx="13.4" cy="4" r="0.8" fill="#111"/><path d="M8.3,13.2 L15.6,10.8 L18.1,14.4 L12,18.1Z" fill="#98ccf0" stroke="#2a2208" stroke-width="0.9" stroke-linejoin="round"/><path d="M18.1,15.6 L24.1,12.6 L27.8,16.2 L21.7,19.3Z" fill="#98ccf0" stroke="#2a2208" stroke-width="0.9" stroke-linejoin="round"/><circle cx="13.4" cy="14.2" r="0.8" fill="#111"/><circle cx="22.8" cy="16" r="0.8" fill="#111"/><path d="M1,17.5 L13,22.6 L14.4,20 L19.3,28.4 L9.6,28.2 L11.4,25.4Z" fill="#d81c24"/></svg>
<svg style="left:394.8px;top:82px" width="32" height="32" viewBox="0 0 32 32"><g opacity="0.55"><path d="M8.5,0.6 A9,9 0 0 0 8.5,18.6Z" fill="#a8a490" stroke="#333" stroke-width="0.8"/><path d="M4,2V17M0,9.6H8.5" stroke="#444" stroke-width="0.8"/></g><circle cx="20.2" cy="18.7" r="9.6" fill="url(#gTan)" stroke="#2a2208" stroke-width="1"/><path d="M20.2,9.1V28.3M10.6,18.7H29.8M12.04,13.9H28.36M12.04,23.5H28.36" stroke="#2a2208" stroke-width="0.9" fill="none"/><ellipse cx="20.2" cy="18.7" rx="4.8" ry="9.6" fill="none" stroke="#2a2208" stroke-width="0.9"/></svg>
<svg style="left:429.7px;top:82px" width="32" height="32" viewBox="0 0 32 32"><g opacity="0.55"><circle cx="7.3" cy="8.7" r="7.4" fill="#a8a490" stroke="#333" stroke-width="0.8"/><path d="M7.3,1.3V16M0,8.7H14.6" stroke="#444" stroke-width="0.8"/></g><circle cx="19.4" cy="18.7" r="9.6" fill="url(#gTan)" stroke="#2a2208" stroke-width="1"/><path d="M19.4,9.1V28.3M9.8,18.7H29M11.24,13.9H27.56M11.24,23.5H27.56" stroke="#2a2208" stroke-width="0.9" fill="none"/><ellipse cx="19.4" cy="18.7" rx="4.8" ry="9.6" fill="none" stroke="#2a2208" stroke-width="0.9"/></svg>
<svg style="left:464.6px;top:82px" width="32" height="32" viewBox="0 0 32 32"><circle cx="16.3" cy="15" r="9" fill="url(#gGrey)"/><g fill="none" stroke="#e020e0" stroke-width="1.2"><circle cx="16.3" cy="15" r="10.4"/><ellipse cx="16.3" cy="15" rx="4.6" ry="10.4"/><path d="M5.9,15H26.7M7.4,9.6H25.2M7.4,20.4H25.2M16.3,4.6V25.4"/></g><path d="M1.7,2.9 L17.5,0.4 L29.3,5.1 L27.8,21.1 L10.2,28.4 L2.9,20.5Z M1.7,2.9 L10.8,9.6 L29.3,5.1 M10.8,9.6 L10.2,28.4" fill="none" stroke="#e8e8e8" stroke-width="1"/></svg>
<svg style="left:499.5px;top:82px" width="32" height="32" viewBox="0 0 32 32"><path d="M0.8,14.4 L16,10.2 L29.4,20.5 L9.9,27.2Z" fill="#a09868" stroke="#2a2208" stroke-width="0.9" stroke-linejoin="round"/><path d="M16,10.2 L9.9,27.2" stroke="#2a2208" stroke-width="0.9"/><path d="M8.4,12.3 L16,10.2" stroke="#2a2208" stroke-width="0.9"/><g opacity="0.8"><path d="M0.2,5.9 L13.6,1.6 L22.1,9.6 L8.1,14.4Z" fill="#6c6648" stroke="#2a2208" stroke-width="0.9" stroke-linejoin="round"/><path d="M6.9,3.75 L15.1,12" stroke="#2a2208" stroke-width="0.9"/><path d="M4.15,10.15 L17.85,5.6" stroke="#2a2208" stroke-width="0.9"/><path d="M0.2,5.9 L22.1,9.6" stroke="#2a2208" stroke-width="0.9"/><path d="M13.6,1.6 L8.1,14.4" stroke="#2a2208" stroke-width="0.9"/></g></svg>
<svg style="left:534.4px;top:82px" width="32" height="32" viewBox="0 0 32 32"><path d="M-0.6,10.2 L15.2,5.9 L28.6,16.2 L10.3,23.5Z" fill="#a09868" stroke="#2a2208" stroke-width="0.9" stroke-linejoin="round"/><path d="M7.3,8.05 L19.45,19.85" stroke="#2a2208" stroke-width="0.9"/><path d="M4.85,16.85 L21.9,11.05" stroke="#2a2208" stroke-width="0.9"/><path d="M7.9,7.7 L17,5.1 L28.6,16.2 L18.8,19.9Z" fill="none" stroke="#f0f0f0" stroke-width="1.1" stroke-linejoin="round"/><use href="#cur" x="20.1" y="15"/></svg>
<svg style="left:569.3px;top:82px" width="32" height="32" viewBox="0 0 32 32"><path d="M0.4,13.2 L14.4,8.3 L25.3,18.1 L8.9,25.4Z" fill="#a09868" stroke="#2a2208" stroke-width="0.9" stroke-linejoin="round"/><path d="M7.4,10.75 L17.1,21.75" stroke="#2a2208" stroke-width="0.9"/><path d="M4.65,19.3 L19.85,13.2" stroke="#2a2208" stroke-width="0.9"/><path d="M14.4,6.5 L19.8,10.8 L19.8,20.6 L14.4,16.2Z" fill="#7c7448" stroke="#2a2208" stroke-width="0.9" stroke-linejoin="round"/><path d="M19.8,10.8 L29,7.1 L29,16.4 L19.8,20.6Z" fill="#a09868" stroke="#2a2208" stroke-width="0.9" stroke-linejoin="round"/><path d="M14.4,6.5 L22.3,3.5 L29,7.1 L19.8,10.8Z" fill="#78b4e4" stroke="#2a2208" stroke-width="0.9" stroke-linejoin="round"/><circle cx="21.4" cy="7" r="0.8" fill="#111"/></svg>
<svg style="left:604.2px;top:82px" width="32" height="32" viewBox="0 0 32 32"><path d="M1.4,8.3 L8.1,5.5 L13,12 L5.7,14.4Z" fill="#6c6648" stroke="#333" stroke-width="0.9" stroke-linejoin="round"/><path d="M14.2,3.5 L20.3,1 L26.4,7.1 L20.3,9.6Z" fill="#6c6648" stroke="#333" stroke-width="0.9" stroke-linejoin="round"/><path d="M5.7,19.9 L23.3,13.2 L30,19.3 L11.2,26.6Z" fill="#a09868" stroke="#2a2208" stroke-width="0.9" stroke-linejoin="round"/><path d="M11.8,17.5 L19.1,15 L24,21.1 L16.7,24.2Z" fill="#8cc0ec" stroke="#f4f4f4" stroke-width="0.9" stroke-linejoin="round"/></svg>
<svg style="left:639.1px;top:82px" width="32" height="32" viewBox="0 0 32 32"><ellipse cx="10" cy="25" rx="10" ry="3.5" fill="#262626" opacity="0.75"/><path d="M5.5,9.6 L14.6,3.8 L28,5.9 L28,20.5 L20.1,27.8 L6.1,22.9Z" fill="#a09868" stroke="#2a2208" stroke-width="1.1" stroke-linejoin="round"/><path d="M5.5,9.6 L14.6,3.8 L28,5.9 L14.6,10.8Z" fill="#c4bc90" stroke="#2a2208" stroke-width="1" stroke-linejoin="round"/><path d="M28,5.9 L28,20.5 L20.1,27.8 L20.1,19.9Z" fill="#7c7448" stroke="#2a2208" stroke-width="1" stroke-linejoin="round"/><path d="M14.6,10.8 L26.2,8.3 L20.1,19.9Z" fill="#88bce8" stroke="#2a2208" stroke-width="0.9" stroke-linejoin="round"/><path d="M20.1,19.9 L20.1,27.8" stroke="#2a2208" stroke-width="1"/></svg>
<svg style="left:674px;top:82px" width="32" height="32" viewBox="0 0 32 32"><path d="M-0.2,15.6 L8.3,13.8 L16.8,24.2 L8.3,27.2Z" fill="#a09868" stroke="#2a2208" stroke-width="0.9" stroke-linejoin="round"/><path d="M13.2,13.8 L21.7,12 L30.2,20.5 L22.3,24.2Z" fill="#a09868" stroke="#2a2208" stroke-width="0.9" stroke-linejoin="round"/><path d="M1,5.9 L15,2.3 L22.3,9.6 L7.7,13.8Z" fill="#8c8460" stroke="#3c3820" stroke-width="0.9" stroke-linejoin="round"/></svg>
<svg style="left:708.9px;top:82px" width="32" height="32" viewBox="0 0 32 32"><path d="M1.4,14.4 L19.6,10.8 L30.6,19.9 L10.5,27.8Z" fill="#a09868" stroke="#2a2208" stroke-width="0.9" stroke-linejoin="round"/><path d="M7.46667,13.2 L17.2,25.1667" stroke="#2a2208" stroke-width="0.9"/><path d="M13.5333,12 L23.9,22.5333" stroke="#2a2208" stroke-width="0.9"/><path d="M4.43333,18.8667 L23.2667,13.8333" stroke="#2a2208" stroke-width="0.9"/><path d="M7.46667,23.3333 L26.9333,16.8667" stroke="#2a2208" stroke-width="0.9"/><path d="M12.9,12.8 L16.6,24.2" stroke="#2a2208" stroke-width="0.9"/><g opacity="0.85"><path d="M2.6,5.3 L13.5,2.3 L20.8,8.9 L8.7,12Z" fill="#6c6648" stroke="#3a3a30" stroke-width="0.9" stroke-linejoin="round"/><path d="M6.23333,4.3 L12.7333,10.9667" stroke="#3a3a30" stroke-width="0.9"/><path d="M9.86667,3.3 L16.7667,9.93333" stroke="#3a3a30" stroke-width="0.9"/><path d="M4.63333,7.53333 L15.9333,4.5" stroke="#3a3a30" stroke-width="0.9"/><path d="M6.66667,9.76667 L18.3667,6.7" stroke="#3a3a30" stroke-width="0.9"/></g><circle cx="9.9" cy="8.9" r="1.1" fill="#e8e8e8"/><circle cx="18.2" cy="10.5" r="1.1" fill="#e8e8e8"/><rect x="11.7" y="11.6" width="2.4" height="2.4" fill="#f4e820" stroke="#333" stroke-width="0.5"/><rect x="15.4" y="23" width="2.4" height="2.4" fill="#f4e820" stroke="#333" stroke-width="0.5"/><use href="#cur" x="19" y="15"/></svg>
<svg style="left:743.8px;top:82px" width="32" height="32" viewBox="0 0 32 32"><path d="M1.2,15 L18.9,11.4 L30.4,19.9 L10.4,27.8Z" fill="#a09868" stroke="#2a2208" stroke-width="0.9" stroke-linejoin="round"/><path d="M10.05,13.2 L20.4,23.85" stroke="#2a2208" stroke-width="0.9"/><path d="M5.8,21.4 L24.65,15.65" stroke="#2a2208" stroke-width="0.9"/><g opacity="0.85"><path d="M1.2,5.9 L15.2,1.4 L26.8,9.6 L9.8,15Z" fill="#6c6648" stroke="#3a3a30" stroke-width="0.9" stroke-linejoin="round"/><path d="M8.2,3.65 L18.3,12.3" stroke="#3a3a30" stroke-width="0.9"/><path d="M5.5,10.45 L21,5.5" stroke="#3a3a30" stroke-width="0.9"/></g><path d="M12.2,8.3 L16.4,13.8" stroke="#e01c28" stroke-width="1.6"/><path d="M15.8,7.7 L20.7,13.2" stroke="#e01c28" stroke-width="1.6"/><path d="M15.8,18.7 L20.1,24.2" stroke="#f4f4f4" stroke-width="1.6"/></svg>
<svg style="left:778.7px;top:82px" width="32" height="32" viewBox="0 0 32 32"><path d="M1.6,14.4 L16.8,10.8 L30.2,20.5 L10.7,27.2Z" fill="#a09868" stroke="#2a2208" stroke-width="0.9" stroke-linejoin="round"/><path d="M16.8,10.8 L10.7,27.2" stroke="#2a2208" stroke-width="0.9"/><g opacity="0.85"><path d="M1,5.3 L14.4,1.4 L22.9,9.6 L8.3,14.4Z" fill="#6c6648" stroke="#3a3a30" stroke-width="0.9" stroke-linejoin="round"/><path d="M1,5.3 L22.9,9.6" stroke="#3a3a30" stroke-width="0.9"/></g></svg>
<svg style="left:813.6px;top:82px" width="32" height="32" viewBox="0 0 32 32"><ellipse cx="12" cy="19" rx="6" ry="2.5" fill="#262626" opacity="0.75"/><path d="M1.1,2.9 L12.3,1 L16.6,4.1 L16.6,8.9 L5.7,10.8 L1.1,7.7Z" fill="#7c7448" stroke="#2a2208" stroke-width="1" stroke-linejoin="round"/><path d="M1.1,2.9 L12.3,1 L16.6,4.1 L5.7,6Z" fill="#c4bc90" stroke="#2a2208" stroke-width="0.9" stroke-linejoin="round"/><path d="M5.7,6 L5.7,10.8" stroke="#2a2208" stroke-width="0.9"/><path d="M6.6,4.8 L14.6,3.6" stroke="#f4f4f4" stroke-width="1.3"/><path d="M8.7,12 L22.1,9.6 L29.4,21.1 L18.4,28.4 L9.3,19.9Z" fill="#a09868" stroke="#2a2208" stroke-width="1" stroke-linejoin="round"/><path d="M8.7,12 L22.1,9.6 L24.5,17.5Z" fill="#c4bc90" stroke="#2a2208" stroke-width="0.9" stroke-linejoin="round"/><path d="M24.5,17.5 L18.4,28.4" stroke="#2a2208" stroke-width="0.9"/><path d="M9.3,19.9 L8.7,12" stroke="#2a2208" stroke-width="0.9"/><rect x="23.2" y="16.2" width="2.8" height="2.8" fill="#f4e820" stroke="#222" stroke-width="0.6"/></svg>
<svg style="left:848.5px;top:82px" width="32" height="32" viewBox="0 0 32 32"><path d="M1.8,9.6 L18.8,3.5 L31,14.4 L21.2,18.7 L13.3,12 L5.4,15Z" fill="#a09868" stroke="#2a2208" stroke-width="0.9" stroke-linejoin="round"/><path d="M10.3,6.6 L13.3,12" stroke="#2a2208" stroke-width="0.9"/><path d="M13.3,12 L24.9,9" stroke="#2a2208" stroke-width="0.9"/><path d="M4.2,19.3 L13.3,16.2 L18.8,21.7 L8.5,25.4Z" fill="#78b4e4" stroke="#2a2208" stroke-width="0.9" stroke-linejoin="round"/><circle cx="11.2" cy="20.6" r="0.8" fill="#111"/></svg>
<svg style="left:883.4px;top:82px" width="32" height="32" viewBox="0 0 32 32"><path d="M0.2,22.9 C8,20 12,18 16.7,16.2 L30.7,19.3 L25.2,27.8 C18,24.5 8,23.5 0.2,22.9Z" fill="url(#gBlueL)" stroke="#2c4c74" stroke-width="0.7"/><path d="M9,19.6 C13,18.5 15.5,14 17.3,9.6 C19,14 21.5,18.5 26,19.6 C22,22 13,22 9,19.6Z" fill="url(#gBall)"/><ellipse cx="17.3" cy="16" rx="9.1" ry="3.4" fill="none" stroke="#e01c28" stroke-width="1.6"/><path d="M16.5,12 V5.6 H14.2 L17.3,1.2 L20.4,5.6 H18.1 V12Z" fill="#e01c28"/></svg>
<svg style="left:918.3px;top:82px" width="32" height="32" viewBox="0 0 32 32"><path d="M4.3,2.3 L18.9,5.9 L18.9,26 L4.9,18.7Z" fill="#f8f8f8" stroke="#111" stroke-width="0.7" stroke-linejoin="round"/><path d="M4.3,2.3 L9.16667,3.5 L9.26667,7.90833 L4.45,6.4Z" fill="#0c0c0c" stroke="none" stroke-width="0" stroke-linejoin="round"/><path d="M4.6,10.5 L9.36667,12.3167 L9.46667,16.725 L4.75,14.6Z" fill="#0c0c0c" stroke="none" stroke-width="0" stroke-linejoin="round"/><path d="M9.26667,7.90833 L14.0833,9.41667 L14.1333,14.1333 L9.36667,12.3167Z" fill="#0c0c0c" stroke="none" stroke-width="0" stroke-linejoin="round"/><path d="M9.46667,16.725 L14.1833,18.85 L14.2333,23.5667 L9.56667,21.1333Z" fill="#0c0c0c" stroke="none" stroke-width="0" stroke-linejoin="round"/><path d="M14.0333,4.7 L18.9,5.9 L18.9,10.925 L14.0833,9.41667Z" fill="#0c0c0c" stroke="none" stroke-width="0" stroke-linejoin="round"/><path d="M14.1333,14.1333 L18.9,15.95 L18.9,20.975 L14.1833,18.85Z" fill="#0c0c0c" stroke="none" stroke-width="0" stroke-linejoin="round"/><path d="M19,11.9 L24.4,8.9 L19.7,7 L30.9,6.7 L30.5,13.6 L27.6,11 L19,16Z" fill="#38a840" stroke="#14501c" stroke-width="0.6" transform="translate(1.1,-0.4)"/><path d="M16,23 L22,19.6 L22.9,21.2 L20.6,22.5 L20.9,28.9 L18.6,28.9 L18.4,23.7 L16.9,24.6Z" fill="#30e038" stroke="#0c5010" stroke-width="0.6" transform="translate(-12,-3.8)"/></svg>
<svg style="left:953.2px;top:82px" width="32" height="32" viewBox="0 0 32 32"><clipPath id="cc26"><path d="M2,4.3 C2.6,3 3.4,2.4 4.4,2.2 L9,2.2 L9.3,7 C12,8.6 15.5,9.2 19,9.1 L19,20.9 C18.4,23.4 17.2,25 15.6,25.8 C12.6,26 9.6,25.6 7.2,24.4 C5,22.6 3.6,20.2 3,17.5 C2,13 1.8,8.5 2,4.3Z"/></clipPath><g clip-path="url(#cc26)"><path d="M0.5,1 L19.5,4.6 L19.5,27.6 L0.5,22.6Z" fill="#f8f8f8" stroke="#111" stroke-width="0.7" stroke-linejoin="round"/><path d="M0.5,1 L6.83333,2.2 L6.83333,7.71667 L0.5,6.4Z" fill="#0c0c0c" stroke="none" stroke-width="0" stroke-linejoin="round"/><path d="M0.5,11.8 L6.83333,13.2333 L6.83333,18.75 L0.5,17.2Z" fill="#0c0c0c" stroke="none" stroke-width="0" stroke-linejoin="round"/><path d="M6.83333,7.71667 L13.1667,9.03333 L13.1667,14.6667 L6.83333,13.2333Z" fill="#0c0c0c" stroke="none" stroke-width="0" stroke-linejoin="round"/><path d="M6.83333,18.75 L13.1667,20.3 L13.1667,25.9333 L6.83333,24.2667Z" fill="#0c0c0c" stroke="none" stroke-width="0" stroke-linejoin="round"/><path d="M13.1667,3.4 L19.5,4.6 L19.5,10.35 L13.1667,9.03333Z" fill="#0c0c0c" stroke="none" stroke-width="0" stroke-linejoin="round"/><path d="M13.1667,14.6667 L19.5,16.1 L19.5,21.85 L13.1667,20.3Z" fill="#0c0c0c" stroke="none" stroke-width="0" stroke-linejoin="round"/></g><path d="M2,4.3 C2.6,3 3.4,2.4 4.4,2.2 L9,2.2 L9.3,7 C12,8.6 15.5,9.2 19,9.1 L19,20.9 C18.4,23.4 17.2,25 15.6,25.8 C12.6,26 9.6,25.6 7.2,24.4 C5,22.6 3.6,20.2 3,17.5 C2,13 1.8,8.5 2,4.3Z" fill="none" stroke="#111" stroke-width="0.6"/><path d="M19,11.9 L24.4,8.9 L19.7,7 L30.9,6.7 L30.5,13.6 L27.6,11 L19,16Z" fill="#38a840" stroke="#14501c" stroke-width="0.6" transform="translate(0,0)"/><path d="M16,23 L22,19.6 L22.9,21.2 L20.6,22.5 L20.9,28.9 L18.6,28.9 L18.4,23.7 L16.9,24.6Z" fill="#30e038" stroke="#0c5010" stroke-width="0.6" transform="translate(0,0)"/></svg>
<svg style="left:988.1px;top:82px" width="32" height="32" viewBox="0 0 32 32"><clipPath id="cc27"><path d="M6.4,2.2 L9.2,2.2 L9.2,7 C12,9 16,9.7 20.3,9.5 C21.2,13 21.4,17 21,20.9 C20.2,22.4 19,23.2 17.5,23.7 C15,24.4 12.6,24.6 10.5,24.4 C7.4,23.4 5,21.4 3.6,18.8 C2.2,16.6 1.4,14.4 1.2,11.9 C1.2,9.6 1.8,7.4 2.9,5.6 C3.8,4.2 5,3 6.4,2.2Z"/></clipPath><g clip-path="url(#cc27)"><path d="M-0.5,0.4 L21.6,4.6 L21.6,26.4 L-0.5,23Z" fill="#f8f8f8" stroke="#111" stroke-width="0.7" stroke-linejoin="round"/><path d="M-0.5,0.4 L6.86667,1.8 L6.86667,7.38333 L-0.5,6.05Z" fill="#0c0c0c" stroke="none" stroke-width="0" stroke-linejoin="round"/><path d="M-0.5,11.7 L6.86667,12.9667 L6.86667,18.55 L-0.5,17.35Z" fill="#0c0c0c" stroke="none" stroke-width="0" stroke-linejoin="round"/><path d="M6.86667,7.38333 L14.2333,8.71667 L14.2333,14.2333 L6.86667,12.9667Z" fill="#0c0c0c" stroke="none" stroke-width="0" stroke-linejoin="round"/><path d="M6.86667,18.55 L14.2333,19.75 L14.2333,25.2667 L6.86667,24.1333Z" fill="#0c0c0c" stroke="none" stroke-width="0" stroke-linejoin="round"/><path d="M14.2333,3.2 L21.6,4.6 L21.6,10.05 L14.2333,8.71667Z" fill="#0c0c0c" stroke="none" stroke-width="0" stroke-linejoin="round"/><path d="M14.2333,14.2333 L21.6,15.5 L21.6,20.95 L14.2333,19.75Z" fill="#0c0c0c" stroke="none" stroke-width="0" stroke-linejoin="round"/></g><path d="M6.4,2.2 L9.2,2.2 L9.2,7 C12,9 16,9.7 20.3,9.5 C21.2,13 21.4,17 21,20.9 C20.2,22.4 19,23.2 17.5,23.7 C15,24.4 12.6,24.6 10.5,24.4 C7.4,23.4 5,21.4 3.6,18.8 C2.2,16.6 1.4,14.4 1.2,11.9 C1.2,9.6 1.8,7.4 2.9,5.6 C3.8,4.2 5,3 6.4,2.2Z" fill="none" stroke="#111" stroke-width="0.6"/><path d="M19,11.9 L24.4,8.9 L19.7,7 L30.9,6.7 L30.5,13.6 L27.6,11 L19,16Z" fill="#38a840" stroke="#14501c" stroke-width="0.6" transform="translate(1.8,0)"/><path d="M16,23 L22,19.6 L22.9,21.2 L20.6,22.5 L20.9,28.9 L18.6,28.9 L18.4,23.7 L16.9,24.6Z" fill="#30e038" stroke="#0c5010" stroke-width="0.6" transform="translate(0.8,0.4)"/></svg>
<svg style="left:1023px;top:82px" width="32" height="32" viewBox="0 0 32 32"><path d="M1.4,5.3 L15.4,0.4 L15.4,17.5 L2,19.9Z" fill="#f8f8f8" stroke="#111" stroke-width="0.7" stroke-linejoin="round"/><path d="M1.4,5.3 L6.06667,3.66667 L6.2,8.81111 L1.6,10.1667Z" fill="#0c0c0c" stroke="none" stroke-width="0" stroke-linejoin="round"/><path d="M1.8,15.0333 L6.33333,13.9556 L6.46667,19.1 L2,19.9Z" fill="#0c0c0c" stroke="none" stroke-width="0" stroke-linejoin="round"/><path d="M6.2,8.81111 L10.8,7.45556 L10.8667,12.8778 L6.33333,13.9556Z" fill="#0c0c0c" stroke="none" stroke-width="0" stroke-linejoin="round"/><path d="M10.7333,2.03333 L15.4,0.4 L15.4,6.1 L10.8,7.45556Z" fill="#0c0c0c" stroke="none" stroke-width="0" stroke-linejoin="round"/><path d="M10.8667,12.8778 L15.4,11.8 L15.4,17.5 L10.9333,18.3Z" fill="#0c0c0c" stroke="none" stroke-width="0" stroke-linejoin="round"/><path d="M17.2,0.4 L30.6,4.7 L30.6,19.3 L17.2,17.5Z" fill="#f8f8f8" stroke="#111" stroke-width="0.7" stroke-linejoin="round"/><path d="M17.2,0.4 L21.6667,1.83333 L21.6667,7.25556 L17.2,6.1Z" fill="#0c0c0c" stroke="none" stroke-width="0" stroke-linejoin="round"/><path d="M17.2,11.8 L21.6667,12.6778 L21.6667,18.1 L17.2,17.5Z" fill="#0c0c0c" stroke="none" stroke-width="0" stroke-linejoin="round"/><path d="M21.6667,7.25556 L26.1333,8.41111 L26.1333,13.5556 L21.6667,12.6778Z" fill="#0c0c0c" stroke="none" stroke-width="0" stroke-linejoin="round"/><path d="M26.1333,3.26667 L30.6,4.7 L30.6,9.56667 L26.1333,8.41111Z" fill="#0c0c0c" stroke="none" stroke-width="0" stroke-linejoin="round"/><path d="M26.1333,13.5556 L30.6,14.4333 L30.6,19.3 L26.1333,18.7Z" fill="#0c0c0c" stroke="none" stroke-width="0" stroke-linejoin="round"/><path d="M3.2,22.3 L16,18.1 L29.4,21.7 L16,29Z" fill="#f8f8f8" stroke="#111" stroke-width="0.7" stroke-linejoin="round"/><path d="M3.2,22.3 L7.46667,20.9 L11.8,22.7889 L7.46667,24.5333Z" fill="#0c0c0c" stroke="none" stroke-width="0" stroke-linejoin="round"/><path d="M11.7333,26.7667 L16.1333,24.6778 L20.4667,26.5667 L16,29Z" fill="#0c0c0c" stroke="none" stroke-width="0" stroke-linejoin="round"/><path d="M11.8,22.7889 L16.1333,21.0444 L20.5333,22.5889 L16.1333,24.6778Z" fill="#0c0c0c" stroke="none" stroke-width="0" stroke-linejoin="round"/><path d="M11.7333,19.5 L16,18.1 L20.4667,19.3 L16.1333,21.0444Z" fill="#0c0c0c" stroke="none" stroke-width="0" stroke-linejoin="round"/><path d="M20.5333,22.5889 L24.9333,20.5 L29.4,21.7 L24.9333,24.1333Z" fill="#0c0c0c" stroke="none" stroke-width="0" stroke-linejoin="round"/><path d="M9.9,9.6 H22.7 V12.8 H18.2 V23 H14.4 V12.8 H9.9Z" fill="#38d840" stroke="#0c5010" stroke-width="0.8"/></svg>
<svg style="left:1057.9px;top:82px" width="32" height="32" viewBox="0 0 32 32"><rect x="4" y="1.6" width="26.4" height="26.6" fill="url(#gPage)" stroke="#222" stroke-width="0.9"/><rect x="4.5" y="2.1" width="25.4" height="3.4" fill="#68b0ec"/><path d="M6,3.8h1M8,3.8h1M10,3.8h1" stroke="#1c3c6c" stroke-width="1"/><path d="M11.5,7.1 L23.7,10.8 L23.7,26.6 L11.5,21.7Z" fill="#f8f8f8" stroke="#111" stroke-width="0.7" stroke-linejoin="round"/><path d="M11.5,7.1 L15.5667,8.33333 L15.5667,12.0833 L11.5,10.75Z" fill="#0c0c0c" stroke="none" stroke-width="0" stroke-linejoin="round"/><path d="M11.5,14.4 L15.5667,15.8333 L15.5667,19.5833 L11.5,18.05Z" fill="#0c0c0c" stroke="none" stroke-width="0" stroke-linejoin="round"/><path d="M15.5667,12.0833 L19.6333,13.4167 L19.6333,17.2667 L15.5667,15.8333Z" fill="#0c0c0c" stroke="none" stroke-width="0" stroke-linejoin="round"/><path d="M15.5667,19.5833 L19.6333,21.1167 L19.6333,24.9667 L15.5667,23.3333Z" fill="#0c0c0c" stroke="none" stroke-width="0" stroke-linejoin="round"/><path d="M19.6333,9.56667 L23.7,10.8 L23.7,14.75 L19.6333,13.4167Z" fill="#0c0c0c" stroke="none" stroke-width="0" stroke-linejoin="round"/><path d="M19.6333,17.2667 L23.7,18.7 L23.7,22.65 L19.6333,21.1167Z" fill="#0c0c0c" stroke="none" stroke-width="0" stroke-linejoin="round"/><path d="M7,18.6 l5,-1.4 l0.5,1.8 l-1.7,0.5 l0,5.4 l-1.8,0 l0,-4.9 l-1.6,0.4z" fill="#38e040" stroke="#0c5010" stroke-width="0.5"/></svg>

<!-- toolbox -->
<div class="a" style="left:3px;top:136px;width:39px;height:560px;border:1px solid #343434;border-top:none;background:#444"></div>
<div class="a" style="left:5px;top:132px;width:2px;height:2px;background:#606060"></div>
<div class="a" style="left:8px;top:135px;width:2px;height:2px;background:#606060"></div>
<div class="a" style="left:11px;top:132px;width:2px;height:2px;background:#606060"></div>
<div class="a" style="left:14px;top:135px;width:2px;height:2px;background:#606060"></div>
<div class="a" style="left:17px;top:132px;width:2px;height:2px;background:#606060"></div>
<div class="a" style="left:20px;top:135px;width:2px;height:2px;background:#606060"></div>
<div class="a" style="left:23px;top:132px;width:2px;height:2px;background:#606060"></div>
<div class="a" style="left:26px;top:135px;width:2px;height:2px;background:#606060"></div>
<div class="a" style="left:29px;top:132px;width:2px;height:2px;background:#606060"></div>
<div class="a" style="left:32px;top:135px;width:2px;height:2px;background:#606060"></div>
<div class="a" style="left:35px;top:132px;width:2px;height:2px;background:#606060"></div>
<div class="a" style="left:38px;top:135px;width:2px;height:2px;background:#606060"></div>
<div class="a" style="left:3.6px;top:137.6px;width:37px;height:36px;border:1.3px solid #2a2a2a;border-radius:1.5px;background:#a6a6a6"></div>
<div class="a" style="left:3.6px;top:174.85px;width:37px;height:36px;border:1.3px solid #2e2e2e;border-radius:1.5px;background:#4a4a4a"></div>
<div class="a" style="left:3.6px;top:212.1px;width:37px;height:36px;border:1.3px solid #2e2e2e;border-radius:1.5px;background:#4a4a4a"></div>
<div class="a" style="left:3.6px;top:249.35px;width:37px;height:36px;border:1.3px solid #2e2e2e;border-radius:1.5px;background:#4a4a4a"></div>
<div class="a" style="left:3.6px;top:286.6px;width:37px;height:36px;border:1.3px solid #2e2e2e;border-radius:1.5px;background:#4a4a4a"></div>
<div class="a" style="left:3.6px;top:323.85px;width:37px;height:36px;border:1.3px solid #2e2e2e;border-radius:1.5px;background:#4a4a4a"></div>
<div class="a" style="left:3.6px;top:394.5px;width:37px;height:36px;border:1.3px solid #2e2e2e;border-radius:1.5px;background:#484848"></div>
<svg style="left:18px;top:148px" width="13" height="20" viewBox="0 0 13 20"><path d="M0,0 L0,15.6 L3.7,12.2 L6.4,18 L9.4,16.6 L6.8,11 L11.8,10.6 Z" fill="#b00008" stroke="#fff" stroke-width="1.3" stroke-linejoin="round"/></svg>
<svg style="left:4.7px;top:175.5px" width="34.5" height="34.5" viewBox="0 0 34.5 34.5"><path d="M8,6 C12,2.5 19,3.5 22.4,5.6 C25.5,9 22.5,13 24,17.4 C21,23 10,25 6.6,22.4 C5,18 9.6,14 7.6,10.4 C6.4,8.6 6.8,7 8,6Z" fill="none" stroke="#b4b4b4" stroke-width="1.1" stroke-dasharray="4 2.4"/><g transform="translate(18.6,12.6) scale(0.88)"><path d="M0,0 L0,15.6 L3.7,12.2 L6.4,18 L9.4,16.6 L6.8,11 L11.8,10.6 Z" fill="#b00008" stroke="#fff" stroke-width="1.3" stroke-linejoin="round"/></g></svg>
<svg style="left:4.7px;top:212.7px" width="34.5" height="34.5" viewBox="0 0 34.5 34.5"><ellipse cx="14.4" cy="26" rx="10.6" ry="6" fill="none" stroke="#e00810" stroke-width="2"/><path d="M29.4,5.6 L31,7.2 L20.4,18.6 L18,16.6Z" fill="#8c5830" stroke="#3c2410" stroke-width="0.7"/><path d="M18,16.6 L20.4,18.6 C18.6,22.6 14,26.4 8.6,26.6 C11.6,24 13.6,19.6 18,16.6Z" fill="#f0e8c8" stroke="#3c3420" stroke-width="0.7"/><g fill="#f4ec30" stroke="#222" stroke-width="0.7"><rect x="7.4" y="19.6" width="2.6" height="2.6"/><rect x="7.4" y="27.6" width="2.6" height="2.6"/><rect x="16.6" y="27.6" width="2.6" height="2.6"/></g></svg>
<svg style="left:4.7px;top:249.8px" width="34.5" height="34.5" viewBox="0 0 34.5 34.5"><path d="M20,2.6 L27.4,18.4 A8.2,2.6 0 0 1 11,18.4Z" fill="url(#gBall)"/><path d="M4.6,17.6 L21.4,25.2 L22.6,22.6 L27,30.4 L18,31.6 L19.6,28.6 L4,19.4Z" fill="#e80c14"/></svg>
<svg style="left:4.7px;top:287px" width="34.5" height="34.5" viewBox="0 0 34.5 34.5"><path d="M7,14 C2,17 3,22 8,24" fill="none" stroke="#e80c14" stroke-width="3.6" opacity="0.85"/><path d="M27,11.4 C33,15 31,23.4 21.4,25.6 L21.4,22 L13,26.6 L21.4,30.8 L21.4,28.6 C33,27 36,15 28.6,9.6Z" fill="#e80c14"/><circle cx="17.2" cy="13.8" r="9" fill="url(#gBall)"/></svg>
<svg style="left:4.7px;top:324px" width="34.5" height="34.5" viewBox="0 0 34.5 34.5"><g fill="#e80c14"><path d="M3.6,3 L10.8,4.4 L8.8,6.4 L13,10.4 L11,12.4 L7,8.2 L5,10.2Z"/><path d="M31,3 L29.6,10.2 L27.6,8.2 L23.4,12.4 L21.4,10.4 L25.6,6.4 L23.6,4.4Z"/><path d="M3.6,30.6 L5,23.4 L7,25.4 L11,21.2 L13,23.2 L8.8,27.2 L10.8,29.2Z"/><path d="M31.6,30.6 L24.4,29.2 L26.4,27.2 L22.2,23.2 L24.2,21.2 L28.4,25.4 L30.4,23.4Z"/></g><path d="M9.6,12 L18,9.4 L24,12.6 L23.4,21.6 L16.4,25 L9.6,21Z" fill="#4c98e4"/><path d="M9.6,12 L18,9.4 L24,12.6 L16.4,15.6Z" fill="#c4dcf4"/><path d="M16.4,15.6 L24,12.6 L23.4,21.6 L16.4,25Z" fill="#2c6cb4"/></svg>
<div class="a" style="left:5.3px;top:444px;width:33.7px;height:33.9px;border:1px solid #2e2e2e;border-radius:3px;background:linear-gradient(#fafafa,#bdbdbd)"></div>
<svg style="left:0px;top:0px" width="46" height="700" viewBox="0 0 46 700"><path d="M10.5,460 L22.2,451.9 L33.9,460 L22.2,468.1Z M16.35,455.95 L28.05,464.05 M28.05,455.95 L16.35,464.05" fill="none" stroke="#333" stroke-width="1.3" stroke-linejoin="round"/><path d="M12.8,470.5 V465.88" stroke="#10a030" stroke-width="1.76"/><path d="M12.8,470.5 L8.84,473.14" stroke="#2030e8" stroke-width="1.76"/><path d="M12.8,470.5 L16.76,473.14" stroke="#e81818" stroke-width="1.76"/></svg>
<div class="a" style="left:5.3px;top:481.9px;width:16.9px;height:17.2px;border:1px solid #2e2e2e;border-radius:3px;background:linear-gradient(#fafafa,#bdbdbd)"></div>
<div class="a" style="left:21.6px;top:481.9px;width:17.4px;height:17.2px;border:1px solid #2e2e2e;border-radius:3px;background:linear-gradient(#fafafa,#bdbdbd)"></div>
<div class="a" style="left:5.3px;top:498.7px;width:16.9px;height:17.4px;border:1px solid #2e2e2e;border-radius:3px;background:linear-gradient(#fafafa,#bdbdbd)"></div>
<div class="a" style="left:21.6px;top:498.7px;width:17.4px;height:17.4px;border:1px solid #2e2e2e;border-radius:3px;background:linear-gradient(#fafafa,#bdbdbd)"></div>
<svg style="left:0px;top:0px" width="46" height="700" viewBox="0 0 46 700"><path d="M7.8,491 H19.8 M13.8,485 V497" stroke="#3a3a3a" stroke-width="1.4"/><path d="M7.8,507.4 H19.8 M13.8,501.4 V513.4" stroke="#3a3a3a" stroke-width="1.4"/><path d="M24,507.4 H36 M30,501.4 V513.4" stroke="#3a3a3a" stroke-width="1.4"/><path d="M23.4,490 L30.2,485.6 L37,490 L30.2,494.4Z M26.8,487.8 L33.6,492.2 M33.6,487.8 L26.8,492.2" fill="none" stroke="#333" stroke-width="1" stroke-linejoin="round"/><path d="M26,495.4 V492.04" stroke="#10a030" stroke-width="1.28"/><path d="M26,495.4 L23.12,497.32" stroke="#2030e8" stroke-width="1.28"/><path d="M26,495.4 L28.88,497.32" stroke="#e81818" stroke-width="1.28"/></svg>
<div class="a" style="left:5.3px;top:519.9px;width:17.3px;height:33.8px;border:1px solid #2e2e2e;border-radius:3px;background:#2c2c2c"></div>
<div class="a" style="left:21px;top:519.9px;width:18px;height:33.8px;border:1px solid #2e2e2e;border-radius:3px;background:linear-gradient(#fafafa,#bdbdbd)"></div>
<svg style="left:0px;top:0px" width="46" height="700" viewBox="0 0 46 700"><path d="M8.4,524.4H18M8.4,528.4H10M12,528.4H16M8.4,532H10M12,532H17.6M8.4,535.6H10M12,535.6H16M8.4,539.2H10M12,539.2H17.6M8.4,542.8H10M12,542.8H16" stroke="#e8e8e8" stroke-width="1"/><path d="M23.2,534.6 L30,530.2 L36.8,534.6 L30,539Z M26.6,532.4 L33.4,536.8 M33.4,532.4 L26.6,536.8" fill="none" stroke="#333" stroke-width="1" stroke-linejoin="round"/><path d="M26,548 V544.64" stroke="#10a030" stroke-width="1.28"/><path d="M26,548 L23.12,549.92" stroke="#2030e8" stroke-width="1.28"/><path d="M26,548 L28.88,549.92" stroke="#e81818" stroke-width="1.28"/></svg>
<div class="a" style="left:5.3px;top:557.9px;width:33.7px;height:34.3px;border:1px solid #2e2e2e;border-radius:3px;background:linear-gradient(#fafafa,#bdbdbd)"></div>
<svg style="left:0px;top:0px" width="46" height="700" viewBox="0 0 46 700"><path d="M10.8,567.4 L22.2,559.8 L33.6,567.4 L22.2,575Z M16.5,563.6 L27.9,571.2 M27.9,563.6 L16.5,571.2" fill="none" stroke="#333" stroke-width="1.2" stroke-linejoin="round"/><path d="M9.8,571.6 V568.24" stroke="#10a030" stroke-width="1.28"/><path d="M9.8,571.6 L6.92,573.52" stroke="#2030e8" stroke-width="1.28"/><path d="M9.8,571.6 L12.68,573.52" stroke="#e81818" stroke-width="1.28"/><rect x="6.6" y="576.3" width="31" height="14.6" fill="#d8d8d8"/><rect x="13.2" y="585.06" width="24.4" height="5.84" fill="#b0b0b0"/><path d="M20.2,576.3 V590.9" stroke="#e01010" stroke-width="1"/><path d="M13.2,585.06 H37.6" stroke="#333" stroke-width="0.8"/><path d="M15.6,585.352 C17.6,577.3 21.6,577.3 24.6,585.06 S31.6,591.9 35.6,581.41" fill="none" stroke="#3c6494" stroke-width="1.2"/><path d="M8.4,579.5 h2.4" stroke="#2040c0" stroke-width="1"/><path d="M8.4,582.5 h2.4" stroke="#e01010" stroke-width="1"/><path d="M8.4,585.5 h2.4" stroke="#10a020" stroke-width="1"/><path d="M12.8,576.3 V590.9" stroke="#888" stroke-width="0.6"/><path d="M6.4,575.6H38" stroke="#3a3a3a" stroke-width="1.2"/></svg>
<div class="a" style="left:5.3px;top:595.9px;width:17.3px;height:34.3px;border:1px solid #2e2e2e;border-radius:3px;background:#2c2c2c"></div>
<div class="a" style="left:21px;top:595.9px;width:18px;height:34.3px;border:1px solid #2e2e2e;border-radius:3px;background:linear-gradient(#fafafa,#bdbdbd)"></div>
<svg style="left:0px;top:0px" width="46" height="700" viewBox="0 0 46 700"><rect x="6.8" y="598.4" width="3" height="13.6" fill="#777"/><g stroke="#ddd" stroke-width="0.7"><rect x="12.2" y="599.6" width="2.4" height="2.4" fill="#666"/><rect x="17" y="599.6" width="2.4" height="2.4" fill="#666"/><rect x="12.2" y="603.6" width="2.4" height="2.4" fill="#e03030"/><rect x="17" y="603.6" width="2.4" height="2.4" fill="#e03030"/><rect x="12.2" y="607.6" width="2.4" height="2.4" fill="#20b030"/><rect x="17" y="607.6" width="2.4" height="2.4" fill="#20b030"/></g><rect x="9" y="614.6" width="9.4" height="9.6" fill="#444" stroke="#1a1a1a" stroke-width="0.6"/><circle cx="13.6" cy="619.2" r="3.2" fill="url(#gGrey)"/><path d="M8.4,625.8H18.8" stroke="#bbb" stroke-width="0.8"/><path d="M8,625.8h1" stroke="#20b030" stroke-width="1"/><path d="M18.4,625.8h1" stroke="#e09020" stroke-width="1"/><path d="M23.2,611 L30,606.6 L36.8,611 L30,615.4Z M26.6,608.8 L33.4,613.2 M33.4,608.8 L26.6,613.2" fill="none" stroke="#333" stroke-width="1" stroke-linejoin="round"/><path d="M26,624.6 V621.24" stroke="#10a030" stroke-width="1.28"/><path d="M26,624.6 L23.12,626.52" stroke="#2030e8" stroke-width="1.28"/><path d="M26,624.6 L28.88,626.52" stroke="#e81818" stroke-width="1.28"/></svg>
<div class="a" style="left:5.3px;top:633.8px;width:33.7px;height:34.3px;border:1px solid #2e2e2e;border-radius:3px;background:linear-gradient(#fafafa,#bdbdbd)"></div>
<div class="a" style="left:21.6px;top:635px;width:16.2px;height:16.6px;background:#2c2c2c;border-radius:0 3px 0 0"></div>
<svg style="left:0px;top:0px" width="46" height="700" viewBox="0 0 46 700"><path d="M7.2,640.6 L13.6,636.4 L20,640.6 L13.6,644.8Z M10.4,638.5 L16.8,642.7 M16.8,638.5 L10.4,642.7" fill="none" stroke="#333" stroke-width="1" stroke-linejoin="round"/><path d="M10.4,648 V644.64" stroke="#10a030" stroke-width="1.28"/><path d="M10.4,648 L7.52,649.92" stroke="#2030e8" stroke-width="1.28"/><path d="M10.4,648 L13.28,649.92" stroke="#e81818" stroke-width="1.28"/><g fill="none" stroke-width="0.9"><rect x="24.2" y="637.6" width="6.4" height="2.6" stroke="#f0e868"/><rect x="27.2" y="641.6" width="6.4" height="2.6" stroke="#bbb"/><rect x="30.2" y="645.6" width="6.4" height="2.6" stroke="#bbb"/><path d="M25.6,640.4V643H27M28.6,644.4V647H30" stroke="#bbb"/></g><rect x="6.6" y="652.2" width="31" height="14.6" fill="#d8d8d8"/><rect x="13.2" y="660.96" width="24.4" height="5.84" fill="#b0b0b0"/><path d="M20.2,652.2 V666.8" stroke="#e01010" stroke-width="1"/><path d="M13.2,660.96 H37.6" stroke="#333" stroke-width="0.8"/><path d="M15.6,661.252 C17.6,653.2 21.6,653.2 24.6,660.96 S31.6,667.8 35.6,657.31" fill="none" stroke="#3c6494" stroke-width="1.2"/><path d="M8.4,655.4 h2.4" stroke="#2040c0" stroke-width="1"/><path d="M8.4,658.4 h2.4" stroke="#e01010" stroke-width="1"/><path d="M8.4,661.4 h2.4" stroke="#10a020" stroke-width="1"/><path d="M12.8,652.2 V666.8" stroke="#888" stroke-width="0.6"/><path d="M6.4,651.6H38" stroke="#3a3a3a" stroke-width="1.2"/></svg>
<div class="a" style="left:5px;top:671px;width:32px;height:24px;border:1px solid #5c5c5c;border-bottom:none;background:#444"></div>
<svg style="left:17.6px;top:684.6px" width="6" height="4" viewBox="0 0 6 4"><path d="M0.4,0.4H5.4L2.9,3.2Z" fill="#333" stroke="#aaa" stroke-width="0.7"/></svg>
<div class="a" style="left:5.9px;top:696.8px;width:32.2px;height:32.2px;background:linear-gradient(135deg,#a4d4d4 0%,#2ca8a8 35%,#109090 70%,#0c8080 100%)"></div>
<div class="a" style="left:5.9px;top:714px;width:32.2px;height:15px;background:linear-gradient(rgba(255,255,255,0),rgba(225,245,245,0.85))"></div>
<svg style="left:5.9px;top:696.8px" width="32.2" height="32.2" viewBox="0 0 32.2 32.2"><path d="M4.6,9.4 L16,2.2 L28,9.4 L28,22.6 L23,23 L16.6,7.4 L9.4,23 L4.6,22.6Z" fill="#0c5c60"/><path d="M16,2.2 L21,5.2 L23,23 L28,22.6 L28,9.4Z" fill="#084448"/><path d="M11.4,18.6 L16.4,8.6 L21.6,18.6 L16.4,23.2Z" fill="#18a0a0"/><path d="M4.6,9.4 L9.4,11.6 L9.4,23 L4.6,22.6Z" fill="#149094"/><text x="16.1" y="30.2" font-family="Liberation Sans" font-size="5.6" font-weight="bold" fill="#fff" text-anchor="middle">MAYA</text></svg>

<!-- viewport -->
<div class="a" style="left:0;top:122px;width:1151px;height:1px;background:#383838"></div>
<div class="a" style="left:44px;top:123px;width:1px;height:611px;background:#3a3a3a"></div>
<div class="a" style="left:46px;top:126px;width:847px;height:608px;border:1px solid #7e7e7e;background:#444"></div>
<div class="t" style="left:54.5px;top:129.5px">View</div>
<div class="t" style="left:91.3px;top:129.5px">Shading</div>
<div class="t" style="left:144.2px;top:129.5px">Lighting</div>
<div class="t" style="left:196.4px;top:129.5px">Show</div>
<div class="t" style="left:237.3px;top:129.5px">Renderer</div>
<div class="t" style="left:297.2px;top:129.5px">Panels</div>
<div class="a" id="scene" style="left:47px;top:166px;width:845px;height:567px;background:linear-gradient(#8395ac 0%,#4d5662 50%,#1b1c1e 100%);overflow:hidden"></div>
<div class="hud" style="left:61.5px;top:165.5px;color:#0a4a1a;letter-spacing:0.3px;-webkit-text-stroke:0.3px #0a4a1a">Verts:</div>
<div class="hud" style="left:125.5px;width:50px;text-align:right;top:165.5px;color:#f4f4f4;letter-spacing:-0.55px;-webkit-text-stroke:0.25px #f4f4f4">851</div>
<div class="hud" style="left:191px;width:50px;text-align:right;top:165.5px;color:#f0f0f0">0</div>
<div class="hud" style="left:257px;width:50px;text-align:right;top:165.5px;color:#f0f0f0">0</div>
<div class="hud" style="left:61.5px;top:185.5px;color:#0a4a1a;letter-spacing:0.3px;-webkit-text-stroke:0.3px #0a4a1a">Edges:</div>
<div class="hud" style="left:125.5px;width:50px;text-align:right;top:185.5px;color:#f4f4f4;letter-spacing:-0.55px;-webkit-text-stroke:0.25px #f4f4f4">1759</div>
<div class="hud" style="left:191px;width:50px;text-align:right;top:185.5px;color:#f0f0f0">0</div>
<div class="hud" style="left:257px;width:50px;text-align:right;top:185.5px;color:#f0f0f0">0</div>
<div class="hud" style="left:61.5px;top:205.5px;color:#0a4a1a;letter-spacing:0.3px;-webkit-text-stroke:0.3px #0a4a1a">Faces:</div>
<div class="hud" style="left:125.5px;width:50px;text-align:right;top:205.5px;color:#f4f4f4;letter-spacing:-0.55px;-webkit-text-stroke:0.25px #f4f4f4">937</div>
<div class="hud" style="left:191px;width:50px;text-align:right;top:205.5px;color:#f0f0f0">0</div>
<div class="hud" style="left:257px;width:50px;text-align:right;top:205.5px;color:#f0f0f0">0</div>
<div class="hud" style="left:61.5px;top:225.5px;color:#0a4a1a;letter-spacing:0.3px;-webkit-text-stroke:0.3px #0a4a1a">Tris:</div>
<div class="hud" style="left:125.5px;width:50px;text-align:right;top:225.5px;color:#f4f4f4;letter-spacing:-0.55px;-webkit-text-stroke:0.25px #f4f4f4">1264</div>
<div class="hud" style="left:191px;width:50px;text-align:right;top:225.5px;color:#f0f0f0">0</div>
<div class="hud" style="left:257px;width:50px;text-align:right;top:225.5px;color:#f0f0f0">0</div>
<div class="hud" style="left:61.5px;top:245.5px;color:#0a4a1a;letter-spacing:0.3px;-webkit-text-stroke:0.3px #0a4a1a">UVs:</div>
<div class="hud" style="left:125.5px;width:50px;text-align:right;top:245.5px;color:#f4f4f4;letter-spacing:-0.55px;-webkit-text-stroke:0.25px #f4f4f4">1277</div>
<div class="hud" style="left:191px;width:50px;text-align:right;top:245.5px;color:#f0f0f0">0</div>
<div class="hud" style="left:257px;width:50px;text-align:right;top:245.5px;color:#f0f0f0">0</div>
<div class="hud" style="left:407px;top:712.5px;color:#0c5220;font-size:11.3px">2D Pan/Zoom : persp</div>
<svg style="left:0;top:0" width="1151" height="831" viewBox="0 0 1151 831">
<defs>
<clipPath id="sceneclip"><rect x="47" y="166" width="845" height="567"/></clipPath>
<linearGradient id="rFront" x1="0" y1="0" x2="0" y2="1"><stop offset="0" stop-color="#fbc800"/><stop offset="0.6" stop-color="#f6c200"/><stop offset="1" stop-color="#e6b300"/></linearGradient>
<linearGradient id="rSide" x1="0" y1="0" x2="0.3" y2="1"><stop offset="0" stop-color="#806400"/><stop offset="0.3" stop-color="#745a00"/><stop offset="1" stop-color="#6c5400"/></linearGradient>
<linearGradient id="rTop" x1="0" y1="0" x2="1" y2="0"><stop offset="0" stop-color="#6e5800"/><stop offset="0.6" stop-color="#725a00"/><stop offset="1" stop-color="#7c6200"/></linearGradient>
<linearGradient id="rCyl" x1="0" y1="0" x2="1" y2="0"><stop offset="0" stop-color="#a06c24"/><stop offset="0.45" stop-color="#e4ac54"/><stop offset="0.6" stop-color="#e0a850"/><stop offset="1" stop-color="#9c6820"/></linearGradient>
<linearGradient id="rArm" x1="0" y1="0" x2="0" y2="1"><stop offset="0" stop-color="#c48c38"/><stop offset="0.35" stop-color="#e8b058"/><stop offset="1" stop-color="#8c5c18"/></linearGradient>
<linearGradient id="rEar" x1="0" y1="0" x2="0" y2="1"><stop offset="0" stop-color="#c82028"/><stop offset="0.5" stop-color="#b01820"/><stop offset="1" stop-color="#500810"/></linearGradient>
<linearGradient id="rWheel" x1="0" y1="0" x2="1" y2="0"><stop offset="0" stop-color="#b4b6ba"/><stop offset="1" stop-color="#9a9ca0"/></linearGradient>
</defs>
<g clip-path="url(#sceneclip)">
<!-- image plane -->
<g>
<path d="M307.5,319.6 L454.2,318.4 L455,500.9 L313.7,510.6 Z" fill="#fff" stroke="#d428d4" stroke-width="1.2"/>
<!-- mini robot -->
<g stroke="#111" stroke-width="1.1" stroke-linejoin="round">
 <path d="M342.5,452 L362.8,453 L362,464 L344,464Z" fill="#e8b060"/>
 <path d="M385,455 L405,455 L404.5,463 L386,463Z" fill="#e8b060"/>
 <path d="M338.5,394.5 C329,399 320,412 316.6,421 L328.5,426 C330.5,416 335,405 341,400Z" fill="#e8b060"/>
 <path d="M435.5,390.6 C442,395 447,406 449.4,418.5 L440,422.5 C439,412 437,404 434,399Z" fill="#e8b060"/>
 <path d="M315.6,421.4 l12.6,4.6 l-0.8,4.6 c-1,1 -2,-2 -3,0 c-1,1 -2,-2 -3,-0.6 c-1,1 -2,-2.4 -3,-1 c-1,1 -2,-2.4 -3,-2z" fill="#fff" stroke-width="0.9"/>
 <path d="M439,421.6 l9.6,-2.4 l0.6,5 c-1,1.4 -2,-1 -3,0.6 c-1,1.4 -2,-1 -3,0.8 c-1,1.4 -2,-1 -3,0.6z" fill="#fff" stroke-width="0.9"/>
 <path d="M406.8,321.7 C410,322.5 413,324.5 414.1,326 C417.5,330 419.5,335 420.2,339.3 L422,366 L412.5,362Z" fill="#e4a850"/>
 <path d="M371.3,326.6 C383,324.5 396,322.5 406.8,321.7 L412.9,362 C400,362.5 385,363.5 371.5,365.5Z" fill="#ecb45c"/>
 <path d="M371.4,364.5 C385,361.5 405,360.5 420.5,364 C427,368 431,374 432.1,378.1 C434.5,386 435.9,395 435.9,403.1 L435.9,443.6 C400,449 360,448.5 326.2,444.5 C329,430 333,420 336.8,412.8 C339,402 341,395 343.5,389.7 C346,382 349.5,376 353.1,372.3 C359,368 365,365.5 371.4,364.5Z" fill="#fcc800" stroke-width="1.3"/>
 <path d="M326.2,444.5 C360,448.5 400,449 435.9,443.6 L435.9,449.6 C400,456.5 360,455.5 327.1,450.6Z" fill="#f4c000"/>
 <path d="M349.3,412.2 L406.1,410 L407,417.6 L350.2,421.4Z" fill="#f8c400" stroke-width="1.3"/>
 <path d="M350,415.6 L406.5,413.4" fill="none" stroke-width="0.9"/>
</g>
<g fill="#8c8858" stroke="#2a2a1a" stroke-width="1.1"><ellipse cx="361.8" cy="398.3" rx="5.2" ry="5.6"/><ellipse cx="380.1" cy="397.4" rx="5.2" ry="5.4"/><ellipse cx="399.7" cy="396.4" rx="4.8" ry="5.4"/></g>
<g fill="#a4a070"><ellipse cx="361.6" cy="397" rx="3.6" ry="3"/><ellipse cx="380" cy="396.2" rx="3.6" ry="2.8"/><ellipse cx="399.4" cy="395.2" rx="3.2" ry="2.8"/></g>
<g fill="#111"><circle cx="332" cy="447.8" r="1"/><circle cx="350.5" cy="449.6" r="1"/><circle cx="377.5" cy="451.4" r="1"/><circle cx="409.5" cy="450.4" r="1"/><circle cx="429" cy="448" r="1"/><circle cx="338" cy="396" r="0.8"/><circle cx="437.5" cy="397" r="0.8"/></g>
<path d="M371.5,338.7 C366,339.5 365.8,352 371.5,353.9Z" fill="#c82028" stroke="#111" stroke-width="0.9"/>
<path d="M415,336.3 C423,336.5 424,350 417,351.5Z" fill="#c82028" stroke="#111" stroke-width="0.9"/>
<ellipse cx="379.4" cy="341.5" rx="3.8" ry="3.6" fill="#d02028" stroke="#111" stroke-width="1.1"/>
<ellipse cx="391.6" cy="338.1" rx="4.9" ry="5.5" fill="#d02028" stroke="#111" stroke-width="1.3"/>
<ellipse cx="379.6" cy="341.4" rx="1.4" ry="1.2" fill="#e8b070" stroke="#111" stroke-width="0.5"/><ellipse cx="391.8" cy="337.8" rx="2" ry="2.2" fill="#e8b070" stroke="#111" stroke-width="0.6"/>
<path d="M373.9,335 C382,333 390,331.6 398.3,330.8" fill="none" stroke="#111" stroke-width="1"/>
<path d="M376.4,351.5 C386,351 397,349.4 406.8,347.2" fill="none" stroke="#111" stroke-width="1.2"/>
<path d="M343.5,346.2 C348,345 356,345 366.5,344" fill="none" stroke="#111" stroke-width="1.3"/>
<path d="M421.4,343.2 L447,342.4" stroke="#111" stroke-width="0.9"/>
<path d="M326.2,498.4 C350,496 380,495 424.4,492.7" fill="none" stroke="#111" stroke-width="1"/>
<ellipse cx="394.5" cy="492.6" rx="11.5" ry="6.7" fill="#b4b4b4" stroke="#111" stroke-width="1"/><ellipse cx="395.5" cy="491.6" rx="6" ry="3.4" fill="#eee" stroke="#333" stroke-width="0.8"/><ellipse cx="396" cy="491.2" rx="2.4" ry="1.4" fill="#999"/>
<ellipse cx="352" cy="493" rx="9" ry="3" fill="#b4b4b4" stroke="#111" stroke-width="0.8"/>
</g>
<!-- main robot: left arm (over image plane) -->
<path d="M321.4,474.6 C326,472.6 334,472.8 339.7,473.8 L340,487.4 C334,488.6 326,488.6 322,487.4 Z" fill="#0a0a0a"/>
<path d="M343.5,464.7 C338.5,470 338.5,488 343.5,492.7 C346,495 352,494.4 358,493.2 L403.2,487.8 L420.5,459.9 C390,460 360,461 343.5,464.7Z" fill="url(#rArm)"/>
<path d="M343.5,464.7 C338.5,470 338.5,488 343.5,492.7" fill="none" stroke="#1a1004" stroke-width="1"/>
<path d="M348.6,463.8 C344.6,471 345,488 349,494.2 M353,463.2 C349.6,471 350,488 353.6,493.8 M357.6,462.8 C354.2,471 354.6,487 358,493.2" fill="none" stroke="#1a1004" stroke-width="1.1"/>
<path d="M402.2,474.4 L420.5,459.9 L424,463 L426.4,460.4 L428,465 L431.1,462 L431.1,491.7 L403.2,487.8 Z" fill="#e0a850" stroke="#2a1a08" stroke-width="0.7"/>
<path d="M402.2,474.4 L431.1,467.6 L431.1,491.7 L403.2,487.8Z" fill="url(#rArm)" stroke="#2a1a08" stroke-width="0.6"/>
<circle cx="407.4" cy="481.4" r="1" fill="#111"/>
<!-- legs -->
<path d="M459.1,596 L498.2,596 L498.2,640 C490,646.5 468,647 459.1,640Z" fill="url(#rCyl)"/>
<path d="M459.1,605 C470,611 488,611 498.2,605 M459.1,609.2 C470,615.2 488,615.2 498.2,609.2 M459.1,613.4 C470,619.4 488,619.4 498.2,613.4" fill="none" stroke="#1a1004" stroke-width="1.1"/>
<path d="M535.7,588 L574.5,586 L574.5,631 C566,638 545,638 535.7,631.5Z" fill="url(#rCyl)"/>
<path d="M535.7,596.6 C546,602.5 564,602.5 574.5,596.6 M535.7,600.8 C546,606.7 564,606.7 574.5,600.8 M535.7,605 C546,610.9 564,610.9 574.5,605" fill="none" stroke="#1a1004" stroke-width="1.1"/>
<!-- wheels -->
<path d="M475.7,646.6 L490,645.9 L492.4,663.8 L491.6,677.9 L477.5,678.7Z" fill="url(#rWheel)"/>
<path d="M477.5,678.7 L491.6,677.9 L488.5,682.6 L475.2,685Z" fill="#3c3c3e"/>
<ellipse cx="471.5" cy="665" rx="6.6" ry="20" fill="#2c2c2e" stroke="#0c0c0c" stroke-width="1"/>
<ellipse cx="471.5" cy="665" rx="4" ry="13" fill="none" stroke="#0c0c0c" stroke-width="1.2"/><ellipse cx="471.5" cy="665" rx="1.6" ry="6" fill="none" stroke="#0c0c0c" stroke-width="1"/>
<path d="M553.4,638 L567.5,636.5 L570.6,651.3 L569.8,667 L556.5,668.8Z" fill="url(#rWheel)"/>
<path d="M556.5,668.8 L569.8,667 L565.1,672.4 L551.8,674.8Z" fill="#3c3c3e"/>
<ellipse cx="548.5" cy="654.8" rx="8" ry="20" fill="#2c2c2e" stroke="#0c0c0c" stroke-width="1" transform="rotate(-6 548.5 654.8)"/>
<ellipse cx="548.5" cy="654.8" rx="5" ry="13" fill="none" stroke="#0c0c0c" stroke-width="1.2" transform="rotate(-6 548.5 654.8)"/><ellipse cx="548.5" cy="654.8" rx="2" ry="6" fill="none" stroke="#0c0c0c" stroke-width="1" transform="rotate(-6 548.5 654.8)"/>
<!-- right arm -->
<path d="M679.4,453.9 L688,453.6 L697,457.7 L697,466.8 L680.3,466.8Z" fill="#0a0a0a"/>
<path d="M686,455.4 L692,455.4 L693,457 L688,457.4Z" fill="#8a8a8a"/>
<path d="M610.5,452.5 L666,449.1 C672,449 680,455 680,461.5 C680,467 677,472 672,474.5 L638.7,474 L614.3,480.7 L612,454 Z" fill="url(#rArm)"/>
<path d="M610.5,452.5 L638.2,461.5 L638.7,474 L614.3,480.7 L612.4,453.9Z" fill="#e6ae56"/>
<path d="M610.5,452.5 L612.4,453.9 L613.4,468 L608.6,455Z" fill="#7c5820"/>
<path d="M612.4,453.9 L638.2,461.5" stroke="#2a1a08" stroke-width="0.7" stroke-dasharray="2.4 1.8" fill="none"/>
<circle cx="635.5" cy="468" r="1.3" fill="#111"/>
<path d="M666,449.1 C671,455 672,467 668.8,474.5 M670,449.2 C675.4,455 676.4,467 672.6,474.2 M674,450.4 C679,456 680,466 676,473.2" fill="none" stroke="#120a02" stroke-width="1.2"/>
<!-- body side -->
<path d="M463,401.9 L489.5,412.5 C482,428 476.2,443 472,460 C468,476 465,500 463,522.5 C462,545 461.7,570 461.7,599.3 L427.2,559 L427.2,551.6 C427.2,535 427.6,515 428.5,502 C430,490 433.5,478 436,470 C437.5,460 439,448 441,441 C444,430 448,420 452,413 C455,408 459,404.5 463,401.9Z" fill="url(#rSide)"/>
<path d="M427.2,551.6 L461.7,588.7" stroke="#1a1200" stroke-width="1" fill="none"/>
<path d="M431.5,461 L434.5,465 L436.6,459.6 L438.4,464 L440.4,459.9 L441.7,470 L441.2,489.8 L438,485 L436,491 L432,490 Z" fill="#5c4420"/>
<path d="M446.4,471 L451.6,464.6 L452.6,474.6 L447.6,483Z" fill="#e4b400"/>
<g fill="#111"><circle cx="435" cy="563" r="0.8"/><circle cx="445" cy="574.5" r="0.8"/><circle cx="455" cy="586" r="0.8"/></g>
<!-- body top -->
<path d="M461.5,401.5 L497.8,401.2 L547.3,399.5 L582.3,409 L489.5,412.5Z" fill="url(#rTop)"/>
<!-- body front -->
<path d="M489.5,412.5 L582.3,409 C600,436 613,472 619.5,508 L618.5,584.3 L461.7,599.3 C461.7,570 462,545 463,522.5 C465,500 468,476 472,460 C476.2,443 482,428 489.5,412.5Z" fill="url(#rFront)"/>
<path d="M461.7,588.7 C520,586.5 560,584 618.5,574.5" fill="none" stroke="#1a1200" stroke-width="1.2"/>
<g fill="#111"><ellipse cx="468.5" cy="594" rx="1" ry="1.6"/><ellipse cx="496" cy="591.3" rx="1.4" ry="1.6"/><ellipse cx="537.5" cy="588.6" rx="1.2" ry="1.6"/><ellipse cx="583" cy="583.5" rx="1.4" ry="1.4"/><ellipse cx="611.5" cy="579" rx="1.2" ry="1.4"/></g>
<!-- buttons -->
<g fill="#1e1e14"><ellipse cx="515.9" cy="493.7" rx="9.6" ry="9.2"/><ellipse cx="546.7" cy="491.9" rx="9.6" ry="9.2"/><ellipse cx="576.7" cy="490.1" rx="9.6" ry="9.2"/></g>
<g fill="#5a583a"><ellipse cx="515.9" cy="493.7" rx="8.2" ry="7.8"/><ellipse cx="546.7" cy="491.9" rx="8.2" ry="7.8"/><ellipse cx="576.7" cy="490.1" rx="8.2" ry="7.8"/></g>
<g fill="#9c9a68" stroke="#1e1e14" stroke-width="0.8"><ellipse cx="516.9" cy="494.6" rx="6.8" ry="6.6"/><ellipse cx="547.8" cy="492.7" rx="6.8" ry="6.6"/><ellipse cx="578.2" cy="490.8" rx="5.6" ry="6.6"/></g>
<!-- mouth -->
<path d="M497,521.4 C520,518.4 560,515.4 585.8,513 L588.3,525.4 C560,528.4 520,532.4 497.4,536.3Z" fill="#fbc800" stroke="#0c0c0c" stroke-width="1.9" stroke-linejoin="round"/>
<path d="M498,528.2 C525,525.4 560,523.6 587,522.6" fill="none" stroke="#0c0c0c" stroke-width="2"/>
<path d="M520,519.6 C545,518.4 565,516 584,514.6" fill="none" stroke="#0c0c0c" stroke-width="1"/>
<!-- neck -->
<path d="M498.2,378 L542,378 L542,404 C530,409 510,409 498.2,404Z" fill="url(#rCyl)"/>
<!-- head -->
<path d="M469.5,307.4 L494.3,294.3 L493,380.3 L469.5,374.3Z" fill="#4e3616"/>
<path d="M494.3,294.3 L577.9,294.9 L576.4,378.5 L493,380.3Z" fill="#e2a850"/>
<!-- ear -->
<path d="M464.2,330.4 L482.4,317.8 C488.6,324 488.6,356 480.8,362.4 L464.4,347.6 C463.2,342 463.2,336 464.2,330.4Z" fill="url(#rEar)"/>
<path d="M464.2,330.4 C462.8,336 462.8,342 464.4,347.6 C466.6,342 466.6,336 464.2,330.4Z" fill="#7c1018"/>
<path d="M577,332.7 C579.4,336 579.4,342 577,346Z" fill="#b01820"/>
<!-- antennas -->
<path d="M467,336.9 L451.8,337.5 L434.8,338.4 L409.2,339.8 L409.2,340.6 L434.8,340.6 L451.8,342.4 L467,343Z" fill="#0a0a0a"/>
<path d="M578.2,335.8 L600,337 L624.7,338.3 L624.7,338.9 L600,340.4 L578.2,341.3Z" fill="#0a0a0a"/>
<!-- face -->
<path d="M505.8,317.6 C520,313.6 545,312.6 559,317.2 C545,315.2 520,315.6 505.8,317.6Z" fill="#111" stroke="#111" stroke-width="0.9"/>
<ellipse cx="518" cy="333.2" rx="9" ry="8.6" fill="#0c0c0c"/><ellipse cx="517.6" cy="333.2" rx="6.2" ry="5.8" fill="#d02028"/><path d="M513,337 C512,332 515,328.6 519,328.4" fill="none" stroke="#0c0c0c" stroke-width="1.2"/><ellipse cx="516.8" cy="332.7" rx="2.4" ry="2" fill="#e8b070" stroke="#0c0c0c" stroke-width="0.9"/>
<ellipse cx="542.9" cy="330.4" rx="11.3" ry="14.9" fill="#0c0c0c"/><ellipse cx="542.6" cy="330.8" rx="8.4" ry="11.4" fill="#d02028"/><ellipse cx="541.4" cy="329.6" rx="5.4" ry="6.2" fill="#0c0c0c"/><ellipse cx="541" cy="329.6" rx="3.6" ry="3.2" fill="#e8b070"/>
<path d="M506.3,354.2 C512,357.4 525,357 540,355.6 C550,354.6 560,353 570,352.2 L570,354.4 C560,355.6 550,357 540,357.8 C525,359 512,358.6 506.3,355.6Z" fill="#111"/>
</g>
</svg>

<!-- vpbar -->
<div class="a" style="left:50px;top:147px;width:1px;height:17px;background:#6e6e6e"></div><div class="a" style="left:51px;top:148px;width:1px;height:15px;background:#222"></div><div class="a" style="left:49px;top:152px;width:4px;height:7px;background:#1e1e1e"></div><div class="a" style="left:49px;top:152px;width:3px;height:7px;border:1px solid #858585;background:#3a3a3a"></div>
<div class="a" style="left:181.5px;top:147px;width:1px;height:17px;background:#6e6e6e"></div><div class="a" style="left:182.5px;top:148px;width:1px;height:15px;background:#222"></div><div class="a" style="left:180.5px;top:152px;width:4px;height:7px;background:#1e1e1e"></div><div class="a" style="left:180.5px;top:152px;width:3px;height:7px;border:1px solid #858585;background:#3a3a3a"></div>
<div class="a" style="left:332.5px;top:147px;width:1px;height:17px;background:#6e6e6e"></div><div class="a" style="left:333.5px;top:148px;width:1px;height:15px;background:#222"></div><div class="a" style="left:331.5px;top:152px;width:4px;height:7px;background:#1e1e1e"></div><div class="a" style="left:331.5px;top:152px;width:3px;height:7px;border:1px solid #858585;background:#3a3a3a"></div>
<div class="a" style="left:483.4px;top:147px;width:1px;height:17px;background:#6e6e6e"></div><div class="a" style="left:484.4px;top:148px;width:1px;height:15px;background:#222"></div><div class="a" style="left:482.4px;top:152px;width:4px;height:7px;background:#1e1e1e"></div><div class="a" style="left:482.4px;top:152px;width:3px;height:7px;border:1px solid #858585;background:#3a3a3a"></div>
<div class="a" style="left:574.4px;top:147px;width:1px;height:17px;background:#6e6e6e"></div><div class="a" style="left:575.4px;top:148px;width:1px;height:15px;background:#222"></div><div class="a" style="left:573.4px;top:152px;width:4px;height:7px;background:#1e1e1e"></div><div class="a" style="left:573.4px;top:152px;width:3px;height:7px;border:1px solid #858585;background:#3a3a3a"></div>
<div class="a" style="left:605.5px;top:147px;width:1px;height:17px;background:#6e6e6e"></div><div class="a" style="left:606.5px;top:148px;width:1px;height:15px;background:#222"></div><div class="a" style="left:604.5px;top:152px;width:4px;height:7px;background:#1e1e1e"></div><div class="a" style="left:604.5px;top:152px;width:3px;height:7px;border:1px solid #858585;background:#3a3a3a"></div>
<svg style="left:58.5px;top:147.5px" width="18" height="15" viewBox="0 0 18 15"><circle cx="5.6" cy="4.9" r="4.6" fill="#d8d8d8" stroke="#2a2a2a" stroke-width="0.8"/><circle cx="5.6" cy="4.9" r="2.9" fill="#8a8a8a" stroke="#f4f4f4" stroke-width="0.9"/><circle cx="5.6" cy="4.9" r="1" fill="#222"/><circle cx="11.8" cy="4.2" r="4" fill="#d8d8d8" stroke="#2a2a2a" stroke-width="0.8"/><circle cx="11.8" cy="4.2" r="2.4" fill="#8a8a8a" stroke="#f4f4f4" stroke-width="0.9"/><circle cx="11.8" cy="4.2" r="0.9" fill="#222"/><path d="M4.2,10.4 L13,7.6 L15,11.4 L6.2,14.4Z" fill="#0c0c0c" stroke="#4a4a4a" stroke-width="0.5"/><path d="M6.6,11.6L12,9.8" stroke="#bbb" stroke-width="0.9"/><path d="M13.6,8 L16.6,7.2 L17,9.6 L14.6,10.6Z" fill="#0c0c0c"/></svg>
<svg style="left:78.5px;top:147.5px" width="18" height="15" viewBox="0 0 18 15"><g transform="scale(0.82)"><circle cx="5.6" cy="4.9" r="4.6" fill="#d8d8d8" stroke="#2a2a2a" stroke-width="0.8"/><circle cx="5.6" cy="4.9" r="2.9" fill="#8a8a8a" stroke="#f4f4f4" stroke-width="0.9"/><circle cx="5.6" cy="4.9" r="1" fill="#222"/><circle cx="11.8" cy="4.2" r="4" fill="#d8d8d8" stroke="#2a2a2a" stroke-width="0.8"/><circle cx="11.8" cy="4.2" r="2.4" fill="#8a8a8a" stroke="#f4f4f4" stroke-width="0.9"/><circle cx="11.8" cy="4.2" r="0.9" fill="#222"/><path d="M4.2,10.4 L13,7.6 L15,11.4 L6.2,14.4Z" fill="#0c0c0c" stroke="#4a4a4a" stroke-width="0.5"/><path d="M6.6,11.6L12,9.8" stroke="#bbb" stroke-width="0.9"/><path d="M13.6,8 L16.6,7.2 L17,9.6 L14.6,10.6Z" fill="#0c0c0c"/></g><rect x="9.4" y="4.6" width="6.6" height="9.6" fill="#f4f4f4" stroke="#1a1a1a" stroke-width="0.8"/><path d="M10.6,7H14.8M10.6,9H14.8M10.6,11H14.8M10.6,12.8H14.8" stroke="#555" stroke-width="0.8"/></svg>
<svg style="left:100px;top:147.6px" width="15" height="14" viewBox="0 0 15 14"><rect x="0.6" y="1.8" width="13.4" height="11.2" fill="url(#gPage)" stroke="#1c1c1c" stroke-width="0.8"/><rect x="2.2" y="3.4" width="3.6" height="8" fill="#bbb" stroke="#888" stroke-width="0.5"/><path d="M7.4,0.4 H11.2 V11.6 L9.3,9.4 L7.4,11.6Z" fill="#20a838" stroke="#0c5018" stroke-width="0.6"/></svg>
<svg style="left:119px;top:147px" width="17" height="15" viewBox="0 0 17 15"><path d="M0.6,9.6 L10.6,6.4 L16.4,10 L6.4,14.2Z" fill="#d8d8d8" stroke="#333" stroke-width="0.7"/><path d="M3.4,10.4 L10.6,8 L13,9.4" stroke="#666" stroke-width="0.6" fill="none"/><path d="M4,3.4 L12.4,0.6 L13.2,8.8 L5.2,11.8Z" fill="#3c78d8" stroke="#e8e8e8" stroke-width="0.9"/><path d="M4.8,7.4 C7,5 10,4.6 12.8,5.4 L13.2,8.8 L5.2,11.8Z" fill="#38a830"/><circle cx="9" cy="4.6" r="1" fill="#f4e040"/></svg>
<div class="a" style="left:138.9px;top:146.5px;width:17.7px;height:17.5px;border:1px solid #333;border-radius:3px;background:#585858"></div>
<svg style="left:138.9px;top:146.5px" width="17.7" height="17.5" viewBox="0 0 17.7 17.5"><path d="M5.4,1.2V9.6M1.2,5.4H9.6" stroke="#e02028" stroke-width="1.3"/><path d="M5.4,0.2l1.6,2h-3.2zM5.4,10.6l1.6,-2h-3.2zM0.2,5.4l2,-1.6v3.2zM10.6,5.4l-2,-1.6v3.2z" fill="#e02028"/><path d="M3,15.4 L8.6,10.4" stroke="#8c5020" stroke-width="2.2"/><path d="M3,15.4 L8.6,10.4" stroke="#d89850" stroke-width="1"/><circle cx="11.8" cy="6.8" r="3.6" fill="#f4f4f4" stroke="#888" stroke-width="0.8"/><path d="M9.8,6.8H13.8M11.8,4.8V8.8" stroke="#e02028" stroke-width="1.3"/></svg>
<svg style="left:158.3px;top:146.8px" width="5.5" height="17.5" viewBox="0 0 5.5 17.5"><path d="M0.5,0.5 H5 V2.8 H2.9 V14.8 H5 V17 H0.5Z" fill="#10f010" stroke="#0a0a0a" stroke-width="0.9"/></svg>
<svg style="left:171.3px;top:146.8px" width="5.5" height="17.5" viewBox="0 0 5.5 17.5"><path d="M0.5,0.5 H5 V2.8 H2.9 V14.8 H5 V17 H0.5Z" fill="#10f010" stroke="#0a0a0a" stroke-width="0.9" transform="translate(5.5,0) scale(-1,1)"/></svg>
<svg style="left:159px;top:147px" width="16" height="17" viewBox="0 0 16 17"><path d="M3,13.6 L9.6,2.6 L13.6,1.4 L14.6,4.8 L7.4,15.4Z" fill="#a81018" stroke="#4c0408" stroke-width="0.6"/><path d="M9.6,2.6 L13.6,1.4 L14.6,4.8 L11.6,7.6Z" fill="#c82830"/><path d="M3,13.6 L7.4,15.4 L2,16.8Z" fill="#f0d8b0" stroke="#444" stroke-width="0.5"/><path d="M4.6,12.4 L8,14" stroke="#eee" stroke-width="1"/></svg>
<div class="a" style="left:189.5px;top:146.5px;width:17.2px;height:17.5px;border:1px solid #333;border-radius:3px;background:#585858"></div>
<div class="a" style="left:191px;top:148px;width:14.4px;height:14.5px;background:#8e8e8e"></div>
<svg style="left:189.5px;top:146.5px" width="17.2" height="17.5" viewBox="0 0 17.2 17.5"><path d="M1.4,8.6 L8.6,4.4 L15.8,8.6 L8.6,12.8Z M5,6.5 L12.2,10.7 M12.2,6.5 L5,10.7" fill="none" stroke="#f8f8f8" stroke-width="1.1"/></svg>
<svg style="left:210.6px;top:148.8px" width="15.2" height="12.2" viewBox="0 0 15.2 12.2"><rect x="0.4" y="0.4" width="14.4" height="11.4" fill="#f0f0f0" stroke="#222" stroke-width="0.8"/><rect x="1.4" y="1.6" width="12.4" height="9" fill="#111"/><rect x="2" y="4" width="3" height="4.4" fill="#90c8f8"/><rect x="6" y="4" width="3" height="4.4" fill="#90c8f8"/><rect x="10" y="4" width="3" height="4.4" fill="#90c8f8"/><path d="M2,2.8H13.4M2,9.6H13.4" stroke="#ddd" stroke-width="0.9" stroke-dasharray="1 1"/></svg>
<svg style="left:230.3px;top:148.6px" width="15.2" height="12.4" viewBox="0 0 15.2 12.4"><rect x="0.4" y="0.4" width="14.4" height="11.6" fill="#ececec" stroke="#222" stroke-width="0.8"/><circle cx="7.6" cy="6.2" r="5" fill="url(#gBall)"/></svg>
<div class="a" style="left:249.3px;top:146.5px;width:18px;height:17.5px;border:1px solid #333;border-radius:3px;background:#585858"></div>
<div class="a" style="left:251px;top:148.2px;width:14.6px;height:14px;background:#8e8e8e"></div>
<svg style="left:249.3px;top:146.5px" width="18" height="17.5" viewBox="0 0 18 17.5"><circle cx="9" cy="8.7" r="4.6" fill="#b8b8b8" stroke="#666" stroke-width="0.8"/></svg>
<svg style="left:270.7px;top:148.6px" width="15" height="12.4" viewBox="0 0 15 12.4"><rect x="0.4" y="0.4" width="14.2" height="11.6" fill="#e0e0e0" stroke="#222" stroke-width="0.8"/><path d="M0.4,0.4L14.6,12M14.6,0.4L0.4,12M7.5,0.4V12M0.4,6.2H14.6" stroke="#444" stroke-width="0.8"/><rect x="3" y="2.6" width="9" height="7.2" fill="none" stroke="#555" stroke-width="0.6"/><rect x="5.2" y="4.4" width="4.6" height="3.6" fill="none" stroke="#555" stroke-width="0.6"/></svg>
<svg style="left:290.6px;top:148.6px" width="15.2" height="12.4" viewBox="0 0 15.2 12.4"><rect x="0.6" y="0.6" width="14" height="11.2" fill="#e8e8e8" stroke="#28a030" stroke-width="1.2"/><circle cx="4.6" cy="4.4" r="1.9" fill="url(#gBall)"/><circle cx="10.6" cy="5" r="1.9" fill="url(#gBall)"/><circle cx="7" cy="8.6" r="1.9" fill="url(#gBall)"/></svg>
<svg style="left:310.6px;top:148.6px" width="15.2" height="12.4" viewBox="0 0 15.2 12.4"><rect x="0.6" y="0.6" width="14" height="11.2" fill="#e8e8e8" stroke="#28a030" stroke-width="1.2"/><text x="7.6" y="10.4" font-family="Liberation Serif" font-weight="bold" font-size="11" text-anchor="middle" fill="#111">T</text></svg>
<svg style="left:342.5px;top:148px" width="14.4" height="14.4" viewBox="0 0 14.4 14.4"><path d="M1,3.6 L8.6,0.8 L13.4,3 L13.4,10.6 L5.8,13.6 L1,10.8Z M1,3.6 L5.8,6 L13.4,3 M5.8,6 V13.6" fill="none" stroke="#f0f0f0" stroke-width="1.1" stroke-linejoin="round"/><path d="M8.6,0.8V8.2L1,10.8M8.6,8.2L13.4,10.6" fill="none" stroke="#aaa" stroke-width="0.6"/></svg>
<div class="a" style="left:360.3px;top:146.5px;width:18.1px;height:17.5px;border:1px solid #333;border-radius:3px;background:#585858"></div>
<svg style="left:362.4px;top:148.2px" width="14.4" height="14.4" viewBox="0 0 14.4 14.4"><path d="M1,3.6 L8.6,0.8 L13.4,3 L13.4,10.6 L5.8,13.6 L1,10.8Z" fill="#4c8cd8"/><path d="M1,3.6 L8.6,0.8 L13.4,3 L5.8,6Z" fill="#9cc8f4"/><path d="M5.8,6 L13.4,3 L13.4,10.6 L5.8,13.6Z" fill="#3470b8"/></svg>
<svg style="left:382.5px;top:148px" width="14.4" height="14.4" viewBox="0 0 14.4 14.4"><path d="M1,3.6 L8.6,0.8 L13.4,3 L13.4,10.6 L5.8,13.6 L1,10.8Z" fill="#4c8cd8"/><path d="M5.8,6 L13.4,3 L13.4,10.6 L5.8,13.6Z" fill="#3470b8"/><path d="M1,3.6 L8.6,0.8 L13.4,3 L5.8,6Z" fill="#9cc8f4"/><path d="M1,3.6 L8.6,0.8 L13.4,3 L13.4,10.6 L5.8,13.6 L1,10.8Z M1,3.6 L5.8,6 L13.4,3 M5.8,6 V13.6" fill="none" stroke="#f4f4f4" stroke-width="1.1" stroke-linejoin="round"/></svg>
<div class="a" style="left:400.7px;top:146.5px;width:17.6px;height:17.5px;border:1px solid #333;border-radius:3px;background:#585858"></div>
<svg style="left:400.7px;top:146.5px" width="17.6" height="17.5" viewBox="0 0 17.6 17.5"><clipPath id="ck1"><circle cx="8.6" cy="8.5" r="6.6"/></clipPath><circle cx="8.6" cy="8.5" r="6.6" fill="#f4f4f4"/><g clip-path="url(#ck1)" fill="#0c0c0c"><path d="M2,2h3.4v3.4H2zM8.6,2h3.2v3.4H8.6zM5.4,5.4h3.2v3.2H5.4zM11.8,5.4h3.6v3.2h-3.6zM2,8.6h3.4v3.2H2zM8.6,8.6h3.2v3.2H8.6zM5.4,11.8h3.2v3.4H5.4zM11.8,11.8h3.4v3.4h-3.4z"/></g><circle cx="8.6" cy="8.5" r="6.6" fill="none" stroke="#222" stroke-width="0.6"/></svg>
<div class="a" style="left:421.7px;top:147.8px;width:14px;height:14px;border-radius:50%;background:radial-gradient(circle,#ffff20 0%,#e8e810 35%,rgba(200,200,0,0.4) 65%,rgba(120,120,0,0) 100%)"></div>
<svg style="left:441.5px;top:147.4px" width="14" height="16" viewBox="0 0 14 16"><ellipse cx="6.8" cy="13.4" rx="5.4" ry="1.4" fill="#777" opacity="0.5"/><circle cx="6.8" cy="6.4" r="5.8" fill="url(#gGrey)"/></svg>
<svg style="left:462px;top:147.8px" width="14" height="14" viewBox="0 0 14 14"><circle cx="6.8" cy="6.8" r="6.6" fill="url(#gDark)"/></svg>
<svg style="left:492px;top:148px" width="16" height="14.4" viewBox="0 0 16 14.4"><path d="M0.6,13.8 L2.6,8.6 H13.2 L15.2,13.8Z" fill="#a8a8a8"/><circle cx="7.8" cy="5.4" r="5.2" fill="url(#gGrey)"/></svg>
<svg style="left:512px;top:149px" width="16" height="12" viewBox="0 0 16 12"><ellipse cx="8" cy="6" rx="7.8" ry="5.6" fill="url(#gGrey)" opacity="0.85"/><path d="M2,5H12M7,2V10" stroke="#ccc" stroke-width="0.5" opacity="0.6"/></svg>
<svg style="left:533.8px;top:148.6px" width="14.4" height="13" viewBox="0 0 14.4 13"><path d="M7.4,0.4 A6.2,6.2 0 0 0 7.4,12.6Z" fill="#9c9c9c"/><path d="M8.2,0.6 L10,1.4 V2.6 L11.6,3 V4.4 L13,4.8 V8.2 L11.6,8.6 V10 L10,10.4 V11.6 L8.2,12.4Z" fill="#b4b4b4"/></svg>
<svg style="left:552px;top:147.6px" width="16" height="15" viewBox="0 0 16 15"><path d="M1,5.6 L7,1.4 L14.6,2 L14.8,9.6 L8.4,14 L1.6,12.4Z" fill="#8c8c8c" opacity="0.75" filter="blur(0.4px)"/><path d="M7,1.4 L14.6,2 L9.4,5.8 L1,5.6Z" fill="#c4c4c4" opacity="0.8"/></svg>
<svg style="left:584.6px;top:148.2px" width="16" height="15" viewBox="0 0 16 15"><rect x="0.6" y="0.6" width="12.8" height="9.2" fill="none" stroke="#20e030" stroke-width="1.1" stroke-dasharray="2 1.4"/><g transform="translate(6.6,5) scale(0.82)"><use href="#cur"/></g></svg>
<div class="a" style="left:614.1px;top:147.2px;width:15.7px;height:15.4px;border-radius:3px;background:#262626"></div>
<div class="a" style="left:634.3px;top:147.2px;width:15.1px;height:15.4px;border-radius:3px;background:#262626"></div>
<div class="a" style="left:654.1px;top:147.2px;width:15.6px;height:15.4px;border-radius:3px;background:#262626"></div>
<svg style="left:615.2px;top:148.2px" width="13.6" height="13.6" viewBox="0 0 13.6 13.6"><path d="M1.4,3.8 L7.6,1 L12.2,3 L12.2,9.8 L6,12.6 L1.4,10.2Z M1.4,3.8 L6,5.8 L12.2,3 M6,5.8V12.6" fill="none" stroke="#e8e8e8" stroke-width="1.1" stroke-linejoin="round"/></svg>
<svg style="left:635px;top:148.2px" width="13.6" height="13.6" viewBox="0 0 13.6 13.6"><rect x="1.6" y="4.2" width="7.4" height="7.4" fill="none" stroke="#e8e8e8" stroke-width="1.1"/><rect x="4.6" y="1.6" width="7.4" height="7.4" fill="none" stroke="#e8e8e8" stroke-width="1.1"/></svg>
<svg style="left:655px;top:148.2px" width="13.6" height="13.6" viewBox="0 0 13.6 13.6"><path d="M3.4,7 L10.4,2.8 M3.4,7 L10.4,11" stroke="#e8e8e8" stroke-width="1.2"/><circle cx="3.4" cy="7" r="2" fill="#e8e8e8"/><circle cx="10.6" cy="2.8" r="2" fill="#262626" stroke="#e8e8e8" stroke-width="1.1"/><circle cx="10.6" cy="11" r="2" fill="#262626" stroke="#e8e8e8" stroke-width="1.1"/></svg>
<svg style="left:66px;top:680px" width="30" height="30" viewBox="0 0 30 30"><path d="M6.4,27.4 V14" stroke="#10f020" stroke-width="1.2"/><path d="M6.4,27.4 H19.2" stroke="#f01010" stroke-width="1.2"/><path d="M7,28.4 L9.6,30" stroke="#1828f0" stroke-width="1.2"/><text x="2.4" y="9" font-family="Liberation Sans" font-weight="bold" font-size="11" fill="#10f020">y</text><text x="17.8" y="24" font-family="Liberation Sans" font-weight="bold" font-size="11" fill="#f01010">x</text><text x="8" y="26.6" font-family="Liberation Sans" font-weight="bold" font-size="10" fill="#1828f0">z</text></svg>
<svg style="left:0px;top:0px" width="1151" height="831" viewBox="0 0 1151 831"><path d="M826,228 L834,237.5 L874,235 L879,229 Z" fill="#1c2430" opacity="0.35" filter="blur(2px)"/><path d="M825.6,190.2 L868,189.8 L873.6,191.3 L832.2,192.5Z" fill="#aab6c5"/><path d="M825.6,190.2 L832.2,192.5 L833.8,234.7 L826.7,226.1Z" fill="#9aa6b5"/><path d="M832.2,192.5 L873.6,191.3 L872.9,232.4 L833.8,234.7Z" fill="url(#gCube)"/><path d="M832.2,192.5 L873.6,191.3 L872.9,232.4 M832.2,192.5 L833.8,234.7 M825.6,190.2 L826.7,226.1" fill="none" stroke="#6c7682" stroke-width="0.8" stroke-dasharray="6 3"/><path d="M829,207 l1.4,1.6 v3 l-1.4,1.4z" fill="#788290"/><text x="853.7" y="218.3" font-family="Liberation Sans" font-weight="bold" font-size="12" fill="#717b88" text-anchor="middle" transform="rotate(-1.5 853 214)" textLength="28.5" lengthAdjust="spacingAndGlyphs">FRONT</text><defs><linearGradient id="gCube" x1="0" y1="0" x2="0" y2="1"><stop offset="0" stop-color="#a9b5c4"/><stop offset="1" stop-color="#97a3b2"/></linearGradient></defs></svg>

<!-- channel -->
<div class="a" style="left:903px;top:134px;width:2px;height:2px;background:#5e5e5e"></div><div class="a" style="left:906px;top:132px;width:2px;height:2px;background:#5e5e5e"></div><div class="a" style="left:909px;top:134px;width:2px;height:2px;background:#5e5e5e"></div><div class="a" style="left:912px;top:132px;width:2px;height:2px;background:#5e5e5e"></div><div class="a" style="left:915px;top:134px;width:2px;height:2px;background:#5e5e5e"></div><div class="a" style="left:918px;top:132px;width:2px;height:2px;background:#5e5e5e"></div><div class="a" style="left:921px;top:134px;width:2px;height:2px;background:#5e5e5e"></div><div class="a" style="left:924px;top:132px;width:2px;height:2px;background:#5e5e5e"></div><div class="a" style="left:927px;top:134px;width:2px;height:2px;background:#5e5e5e"></div><div class="a" style="left:930px;top:132px;width:2px;height:2px;background:#5e5e5e"></div>
<div class="a" style="left:1070px;top:134px;width:2px;height:2px;background:#5e5e5e"></div><div class="a" style="left:1073px;top:132px;width:2px;height:2px;background:#5e5e5e"></div><div class="a" style="left:1076px;top:134px;width:2px;height:2px;background:#5e5e5e"></div><div class="a" style="left:1079px;top:132px;width:2px;height:2px;background:#5e5e5e"></div><div class="a" style="left:1082px;top:134px;width:2px;height:2px;background:#5e5e5e"></div><div class="a" style="left:1085px;top:132px;width:2px;height:2px;background:#5e5e5e"></div><div class="a" style="left:1088px;top:134px;width:2px;height:2px;background:#5e5e5e"></div><div class="a" style="left:1091px;top:132px;width:2px;height:2px;background:#5e5e5e"></div><div class="a" style="left:1094px;top:134px;width:2px;height:2px;background:#5e5e5e"></div>
<div class="t" style="left:945.5px;top:128px;font-size:9.5px;color:#e0e0e0;letter-spacing:-0.02px">Channel Box / Layer Editor</div>
<div class="a" style="left:1101px;top:128px;width:12px;height:12px;border:1px solid #1e1e1e;border-radius:2px;background:#3a3a3a"></div>
<div class="a" style="left:1116px;top:128px;width:12px;height:12px;border:1px solid #1e1e1e;border-radius:2px;background:#3a3a3a"></div>
<svg style="left:1101px;top:128px" width="12" height="12" viewBox="0 0 12 12"><rect x="4.6" y="2.6" width="5" height="4.4" fill="#3a3a3a" stroke="#eee" stroke-width="1"/><path d="M4.6,3.2H9.6" stroke="#eee" stroke-width="1.4"/><rect x="2.4" y="5" width="5" height="4.4" fill="#3a3a3a" stroke="#eee" stroke-width="1"/><path d="M2.4,5.6H7.4" stroke="#eee" stroke-width="1.4"/></svg>
<svg style="left:1116px;top:128px" width="12" height="12" viewBox="0 0 12 12"><path d="M3,3 L9,9 M9,3 L3,9" stroke="#eee" stroke-width="1.4"/></svg>
<svg style="left:1068px;top:146px" width="17" height="17" viewBox="0 0 17 17"><path d="M8.4,9 V2.4" stroke="#10b030" stroke-width="1.4"/><path d="M8.4,0.2 l2.2,3.4 h-4.4z" fill="#20c840"/><path d="M8.4,9 L2.6,9.6" stroke="#1830c0" stroke-width="1.4"/><path d="M0.4,9.8 l3.6,-2.2 l0.4,4z" fill="#2040e0"/><path d="M8.4,9 L13.6,13.6" stroke="#c01818" stroke-width="1.4"/><path d="M15.4,15.4 l-4,-0.6 l2.8,-3z" fill="#e02020"/><rect x="6.6" y="8" width="3" height="3" fill="#222" stroke="#ddd" stroke-width="0.6"/></svg>
<svg style="left:1089px;top:147px" width="16" height="16" viewBox="0 0 16 16"><circle cx="7.6" cy="7.6" r="6.4" fill="none" stroke="#9a9a9a" stroke-width="1.4"/><path d="M7.6,1.8 A5.8,5.8 0 0 0 7.6,13.4Z" fill="#9a9a9a"/><path d="M7.6,7.6 L3,3.6" stroke="#444" stroke-width="0.8"/></svg>
<svg style="left:1110px;top:146.5px" width="16" height="16" viewBox="0 0 16 16"><path d="M1.6,14 L10.6,5" stroke="#9a9a9a" stroke-width="1.8"/><path d="M14.6,1.2 L13.4,8 L7.6,2.4Z" fill="#9a9a9a"/></svg>
<div class="t" style="left:909.4px;top:169px">Channels</div>
<div class="t" style="left:968.3px;top:169px">Edit</div>
<div class="t" style="left:1001.5px;top:169px">Object</div>
<div class="t" style="left:1048.4px;top:169px">Show</div>
<div class="a" style="left:902.5px;top:186.5px;width:225px;height:355px;border:1px solid #5a5a5a;border-top-color:#333;border-left-color:#333;border-radius:2px;background:#2a2a2a"></div>
<div class="a" style="left:904.5px;top:188.5px;width:221px;height:351px;border:1px solid #383838;background:#2b2b2b"></div>
<div class="a" style="left:903.5px;top:188px;width:1px;height:353px;background:#666"></div>
<div class="a" style="left:904.5px;top:188px;width:1px;height:353px;background:#1e1e1e"></div>
<div class="a" style="left:897px;top:328px;width:2px;height:2px;background:#5c5c5c"></div>
<div class="a" style="left:896px;top:327px;width:2px;height:1px;background:#3a3a3a"></div>
<div class="a" style="left:897px;top:333px;width:2px;height:2px;background:#5c5c5c"></div>
<div class="a" style="left:896px;top:332px;width:2px;height:1px;background:#3a3a3a"></div>
<div class="a" style="left:897px;top:338px;width:2px;height:2px;background:#5c5c5c"></div>
<div class="a" style="left:896px;top:337px;width:2px;height:1px;background:#3a3a3a"></div>
<div class="a" style="left:897px;top:343px;width:2px;height:2px;background:#5c5c5c"></div>
<div class="a" style="left:896px;top:342px;width:2px;height:1px;background:#3a3a3a"></div>
<div class="a" style="left:897px;top:348px;width:2px;height:2px;background:#5c5c5c"></div>
<div class="a" style="left:896px;top:347px;width:2px;height:1px;background:#3a3a3a"></div>
<div class="a" style="left:897px;top:353px;width:2px;height:2px;background:#5c5c5c"></div>
<div class="a" style="left:896px;top:352px;width:2px;height:1px;background:#3a3a3a"></div>
<div class="a" style="left:897px;top:358px;width:2px;height:2px;background:#5c5c5c"></div>
<div class="a" style="left:896px;top:357px;width:2px;height:1px;background:#3a3a3a"></div>
<div class="a" style="left:897px;top:363px;width:2px;height:2px;background:#5c5c5c"></div>
<div class="a" style="left:896px;top:362px;width:2px;height:1px;background:#3a3a3a"></div>
<div class="a" style="left:897px;top:368px;width:2px;height:2px;background:#5c5c5c"></div>
<div class="a" style="left:896px;top:367px;width:2px;height:1px;background:#3a3a3a"></div>
<div class="a" style="left:897px;top:373px;width:2px;height:2px;background:#5c5c5c"></div>
<div class="a" style="left:896px;top:372px;width:2px;height:1px;background:#3a3a3a"></div>
<div class="a" style="left:897px;top:378px;width:2px;height:2px;background:#5c5c5c"></div>
<div class="a" style="left:896px;top:377px;width:2px;height:1px;background:#3a3a3a"></div>
<div class="a" style="left:897px;top:383px;width:2px;height:2px;background:#5c5c5c"></div>
<div class="a" style="left:896px;top:382px;width:2px;height:1px;background:#3a3a3a"></div>
<div class="a" style="left:897px;top:388px;width:2px;height:2px;background:#5c5c5c"></div>
<div class="a" style="left:896px;top:387px;width:2px;height:1px;background:#3a3a3a"></div>
<div class="a" style="left:897px;top:393px;width:2px;height:2px;background:#5c5c5c"></div>
<div class="a" style="left:896px;top:392px;width:2px;height:1px;background:#3a3a3a"></div>
<div class="a" style="left:897px;top:398px;width:2px;height:2px;background:#5c5c5c"></div>
<div class="a" style="left:896px;top:397px;width:2px;height:1px;background:#3a3a3a"></div>
<div class="a" style="left:897px;top:403px;width:2px;height:2px;background:#5c5c5c"></div>
<div class="a" style="left:896px;top:402px;width:2px;height:1px;background:#3a3a3a"></div>
<div class="a" style="left:897px;top:408px;width:2px;height:2px;background:#5c5c5c"></div>
<div class="a" style="left:896px;top:407px;width:2px;height:1px;background:#3a3a3a"></div>
<div class="a" style="left:897px;top:413px;width:2px;height:2px;background:#5c5c5c"></div>
<div class="a" style="left:896px;top:412px;width:2px;height:1px;background:#3a3a3a"></div>
<div class="a" style="left:897px;top:418px;width:2px;height:2px;background:#5c5c5c"></div>
<div class="a" style="left:896px;top:417px;width:2px;height:1px;background:#3a3a3a"></div>
<div class="a" style="left:897px;top:423px;width:2px;height:2px;background:#5c5c5c"></div>
<div class="a" style="left:896px;top:422px;width:2px;height:1px;background:#3a3a3a"></div>
<div class="a" style="left:897px;top:428px;width:2px;height:2px;background:#5c5c5c"></div>
<div class="a" style="left:896px;top:427px;width:2px;height:1px;background:#3a3a3a"></div>
<div class="a" style="left:897px;top:433px;width:2px;height:2px;background:#5c5c5c"></div>
<div class="a" style="left:896px;top:432px;width:2px;height:1px;background:#3a3a3a"></div>
<div class="a" style="left:897px;top:438px;width:2px;height:2px;background:#5c5c5c"></div>
<div class="a" style="left:896px;top:437px;width:2px;height:1px;background:#3a3a3a"></div>
<div class="a" style="left:897px;top:443px;width:2px;height:2px;background:#5c5c5c"></div>
<div class="a" style="left:896px;top:442px;width:2px;height:1px;background:#3a3a3a"></div>
<div class="a" style="left:897px;top:448px;width:2px;height:2px;background:#5c5c5c"></div>
<div class="a" style="left:896px;top:447px;width:2px;height:1px;background:#3a3a3a"></div>
<div class="a" style="left:897px;top:453px;width:2px;height:2px;background:#5c5c5c"></div>
<div class="a" style="left:896px;top:452px;width:2px;height:1px;background:#3a3a3a"></div>
<div class="a" style="left:897px;top:458px;width:2px;height:2px;background:#5c5c5c"></div>
<div class="a" style="left:896px;top:457px;width:2px;height:1px;background:#3a3a3a"></div>
<div class="a" style="left:897px;top:463px;width:2px;height:2px;background:#5c5c5c"></div>
<div class="a" style="left:896px;top:462px;width:2px;height:1px;background:#3a3a3a"></div>
<div class="a" style="left:897px;top:468px;width:2px;height:2px;background:#5c5c5c"></div>
<div class="a" style="left:896px;top:467px;width:2px;height:1px;background:#3a3a3a"></div>
<div class="a" style="left:897px;top:473px;width:2px;height:2px;background:#5c5c5c"></div>
<div class="a" style="left:896px;top:472px;width:2px;height:1px;background:#3a3a3a"></div>
<div class="a" style="left:897px;top:478px;width:2px;height:2px;background:#5c5c5c"></div>
<div class="a" style="left:896px;top:477px;width:2px;height:1px;background:#3a3a3a"></div>
<div class="a" style="left:897px;top:483px;width:2px;height:2px;background:#5c5c5c"></div>
<div class="a" style="left:896px;top:482px;width:2px;height:1px;background:#3a3a3a"></div>
<div class="a" style="left:897px;top:488px;width:2px;height:2px;background:#5c5c5c"></div>
<div class="a" style="left:896px;top:487px;width:2px;height:1px;background:#3a3a3a"></div>
<div class="a" style="left:897px;top:493px;width:2px;height:2px;background:#5c5c5c"></div>
<div class="a" style="left:896px;top:492px;width:2px;height:1px;background:#3a3a3a"></div>
<div class="a" style="left:897px;top:498px;width:2px;height:2px;background:#5c5c5c"></div>
<div class="a" style="left:896px;top:497px;width:2px;height:1px;background:#3a3a3a"></div>
<div class="a" style="left:897px;top:503px;width:2px;height:2px;background:#5c5c5c"></div>
<div class="a" style="left:896px;top:502px;width:2px;height:1px;background:#3a3a3a"></div>
<div class="a" style="left:897px;top:508px;width:2px;height:2px;background:#5c5c5c"></div>
<div class="a" style="left:896px;top:507px;width:2px;height:1px;background:#3a3a3a"></div>
<div class="a" style="left:897px;top:513px;width:2px;height:2px;background:#5c5c5c"></div>
<div class="a" style="left:896px;top:512px;width:2px;height:1px;background:#3a3a3a"></div>
<div class="a" style="left:897px;top:518px;width:2px;height:2px;background:#5c5c5c"></div>
<div class="a" style="left:896px;top:517px;width:2px;height:1px;background:#3a3a3a"></div>
<div class="a" style="left:897px;top:523px;width:2px;height:2px;background:#5c5c5c"></div>
<div class="a" style="left:896px;top:522px;width:2px;height:1px;background:#3a3a3a"></div>
<div class="a" style="left:1131.5px;top:126px;width:19.5px;height:97.5px;border:1px solid #2c2c2c;border-right:none;border-radius:4px 0 0 4px;background:#3c3c3c"></div>
<div class="a" style="left:1129.5px;top:223.5px;width:21.5px;height:150px;border:1px solid #707070;border-right:none;border-radius:4px 0 0 4px;background:#5e5e5e"></div>
<div class="t" style="left:1134px;top:136px;font-size:11.5px;transform-origin:0 0;transform:translate(11px,0) rotate(90deg);color:#e0e0e0;letter-spacing:-0.1px">Attribute Editor</div>
<div class="t" style="left:1134px;top:234.5px;font-size:11.5px;transform-origin:0 0;transform:translate(11px,0) rotate(90deg);color:#e8e8e8;letter-spacing:-0.42px">Channel Box / Layer Editor</div>
<div class="a" style="left:977px;top:547px;width:2px;height:2px;background:#5e5e5e"></div><div class="a" style="left:980px;top:545px;width:2px;height:2px;background:#5e5e5e"></div><div class="a" style="left:983px;top:547px;width:2px;height:2px;background:#5e5e5e"></div><div class="a" style="left:986px;top:545px;width:2px;height:2px;background:#5e5e5e"></div><div class="a" style="left:989px;top:547px;width:2px;height:2px;background:#5e5e5e"></div><div class="a" style="left:992px;top:545px;width:2px;height:2px;background:#5e5e5e"></div><div class="a" style="left:995px;top:547px;width:2px;height:2px;background:#5e5e5e"></div><div class="a" style="left:998px;top:545px;width:2px;height:2px;background:#5e5e5e"></div><div class="a" style="left:1001px;top:547px;width:2px;height:2px;background:#5e5e5e"></div><div class="a" style="left:1004px;top:545px;width:2px;height:2px;background:#5e5e5e"></div><div class="a" style="left:1007px;top:547px;width:2px;height:2px;background:#5e5e5e"></div><div class="a" style="left:1010px;top:545px;width:2px;height:2px;background:#5e5e5e"></div><div class="a" style="left:1013px;top:547px;width:2px;height:2px;background:#5e5e5e"></div><div class="a" style="left:1016px;top:545px;width:2px;height:2px;background:#5e5e5e"></div><div class="a" style="left:1019px;top:547px;width:2px;height:2px;background:#5e5e5e"></div><div class="a" style="left:1022px;top:545px;width:2px;height:2px;background:#5e5e5e"></div><div class="a" style="left:1025px;top:547px;width:2px;height:2px;background:#5e5e5e"></div><div class="a" style="left:1028px;top:545px;width:2px;height:2px;background:#5e5e5e"></div><div class="a" style="left:1031px;top:547px;width:2px;height:2px;background:#5e5e5e"></div><div class="a" style="left:1034px;top:545px;width:2px;height:2px;background:#5e5e5e"></div><div class="a" style="left:1037px;top:547px;width:2px;height:2px;background:#5e5e5e"></div><div class="a" style="left:1040px;top:545px;width:2px;height:2px;background:#5e5e5e"></div><div class="a" style="left:1043px;top:547px;width:2px;height:2px;background:#5e5e5e"></div><div class="a" style="left:1046px;top:545px;width:2px;height:2px;background:#5e5e5e"></div>
<div class="a" style="left:960px;top:557.5px;width:60px;height:17.5px;border:1px solid #2c2c2c;border-bottom:none;border-radius:3px 3px 0 0;background:#3b3b3b"></div>
<div class="a" style="left:1019px;top:557.5px;width:46px;height:17.5px;border:1px solid #2c2c2c;border-bottom:none;border-radius:3px 3px 0 0;background:#3b3b3b"></div>
<div class="a" style="left:902.5px;top:574.3px;width:225px;height:158px;border:1px solid #2c2c2c;border-radius:0 3px 3px 3px;background:#444;box-shadow:inset 0 1px 0 #565656, inset 1px 0 0 #505050"></div>
<div class="a" style="left:902.5px;top:555px;width:57.5px;height:20.3px;border:1px solid #707070;border-bottom:none;border-right-color:#2c2c2c;border-radius:3px 3px 0 0;background:#5e5e5e"></div>
<div class="t" style="left:913px;top:558.5px;color:#e8e8e8">Display</div>
<div class="t" style="left:971px;top:559.5px">Render</div>
<div class="t" style="left:1030.5px;top:559.5px">Anim</div>
<div class="t" style="left:912px;top:578.5px">Layers</div>
<div class="t" style="left:959.3px;top:578.5px">Options</div>
<div class="t" style="left:1011px;top:578.5px">Help</div>
<svg style="left:1024.6px;top:598px" width="21" height="18" viewBox="0 0 21 18"><path d="M5.6,13.8 l7.6,-3.6 l6.6,2.6 l-7.2,4.2z" fill="#eee" stroke="#222" stroke-width="0.7"/><path d="M5.6,10.2 l7.6,-3.6 l6.6,2.6 l-7.2,4.2z" fill="#eee" stroke="#222" stroke-width="0.7"/><path d="M5.6,6.6 l7.6,-3.6 l6.6,2.6 l-7.2,4.2z" fill="#7a7a7a" stroke="#222" stroke-width="0.7"/><path d="M3,17 V4.6" stroke="#d81c24" stroke-width="1.3"/><path d="M3,1 l2.4,4.4 h-4.8z" fill="#d81c24"/></svg>
<svg style="left:1049.8px;top:598px" width="21" height="18" viewBox="0 0 21 18"><path d="M5.6,13.8 l7.6,-3.6 l6.6,2.6 l-7.2,4.2z" fill="#7a7a7a" stroke="#222" stroke-width="0.7"/><path d="M5.6,10.2 l7.6,-3.6 l6.6,2.6 l-7.2,4.2z" fill="#7a7a7a" stroke="#222" stroke-width="0.7"/><path d="M5.6,6.6 l7.6,-3.6 l6.6,2.6 l-7.2,4.2z" fill="#eee" stroke="#222" stroke-width="0.7"/><path d="M3,1 V13.4" stroke="#d81c24" stroke-width="1.3"/><path d="M3,17 l2.4,-4.4 h-4.8z" fill="#d81c24"/></svg>
<svg style="left:1077px;top:597px" width="22" height="20" viewBox="0 0 22 20"><path d="M0.6,14.8 L9.6,10 L18.6,12.6 L11.6,18.4Z" fill="#ececec" stroke="#222" stroke-width="0.7"/><path d="M14.4,-0.4 l1.2,3.2 l3.4,-1.4 l-1.6,3.2 l3,1.4 l-3,1.2 l1.6,3.2 l-3.4,-1.4 l-1.2,3.2 l-1.2,-3.2 l-3.4,1.4 l1.6,-3.2 l-3,-1.2 l3,-1.4 l-1.6,-3.2 l3.4,1.4z" fill="#f89820"/><circle cx="14.4" cy="6.2" r="2.2" fill="#fff4c0"/></svg>
<svg style="left:1101.5px;top:597px" width="22" height="20" viewBox="0 0 22 20"><path d="M0.6,14.8 L9.6,10 L18.6,12.6 L11.6,18.4Z" fill="#ececec" stroke="#222" stroke-width="0.7"/><circle cx="6.4" cy="10.6" r="3.6" fill="url(#gBall)"/><path d="M14.8,-0.4 l1.2,3.2 l3.4,-1.4 l-1.6,3.2 l3,1.4 l-3,1.2 l1.6,3.2 l-3.4,-1.4 l-1.2,3.2 l-1.2,-3.2 l-3.4,1.4 l1.6,-3.2 l-3,-1.2 l3,-1.4 l-1.6,-3.2 l3.4,1.4z" fill="#f89820"/><circle cx="14.8" cy="6.2" r="2.2" fill="#fff4c0"/></svg>
<div class="a" style="left:906px;top:621px;width:217.5px;height:107.5px;border:1px solid #333;border-radius:3px;background:#2a2a2a"></div>
<div class="a" style="left:923px;top:712px;width:167px;height:14px;background:repeating-conic-gradient(#3a3a3a 0% 25%,#2e2e2e 0% 50%) 0 0/2px 2px"></div>
<div class="a" style="left:908.6px;top:711.6px;width:15px;height:14.6px;border:1px solid #2c2c2c;border-radius:2px;background:linear-gradient(#6a6a6a,#5a5a5a)"></div>
<div class="a" style="left:924.6px;top:711.6px;width:97.6px;height:14.6px;border:1px solid #2c2c2c;border-radius:2px;background:linear-gradient(#6a6a6a,#5a5a5a)"></div>
<div class="a" style="left:1090px;top:711.6px;width:14.4px;height:14.6px;border:1px solid #2c2c2c;border-radius:2px;background:linear-gradient(#6a6a6a,#5a5a5a)"></div>
<div class="a" style="left:1105.4px;top:711.6px;width:14.8px;height:14.6px;border:1px solid #2c2c2c;border-radius:2px;background:linear-gradient(#6a6a6a,#5a5a5a)"></div>
<svg style="left:912.6px;top:715px" width="6" height="8" viewBox="0 0 6 8"><path d="M5,0.4 V7.2 L0.6,3.8Z" fill="#e0e0e0"/></svg>
<svg style="left:1094px;top:715px" width="6" height="8" viewBox="0 0 6 8"><path d="M5,0.4 V7.2 L0.6,3.8Z" fill="#e0e0e0"/></svg>
<svg style="left:1110.4px;top:715px" width="6" height="8" viewBox="0 0 6 8"><path d="M1,0.4 V7.2 L5.4,3.8Z" fill="#e0e0e0"/></svg>
<div class="a" style="left:965.5px;top:714.6px;width:1.5px;height:1.5px;background:#333"></div>
<div class="a" style="left:969.5px;top:714.6px;width:1.5px;height:1.5px;background:#333"></div>
<div class="a" style="left:973.5px;top:714.6px;width:1.5px;height:1.5px;background:#333"></div>
<div class="a" style="left:977.5px;top:714.6px;width:1.5px;height:1.5px;background:#333"></div>
<div class="a" style="left:981.5px;top:714.6px;width:1.5px;height:1.5px;background:#333"></div>
<div class="a" style="left:965.5px;top:718.6px;width:1.5px;height:1.5px;background:#333"></div>
<div class="a" style="left:969.5px;top:718.6px;width:1.5px;height:1.5px;background:#333"></div>
<div class="a" style="left:973.5px;top:718.6px;width:1.5px;height:1.5px;background:#333"></div>
<div class="a" style="left:977.5px;top:718.6px;width:1.5px;height:1.5px;background:#333"></div>
<div class="a" style="left:981.5px;top:718.6px;width:1.5px;height:1.5px;background:#333"></div>
<div class="a" style="left:965.5px;top:722.6px;width:1.5px;height:1.5px;background:#333"></div>
<div class="a" style="left:969.5px;top:722.6px;width:1.5px;height:1.5px;background:#333"></div>
<div class="a" style="left:973.5px;top:722.6px;width:1.5px;height:1.5px;background:#333"></div>
<div class="a" style="left:977.5px;top:722.6px;width:1.5px;height:1.5px;background:#333"></div>
<div class="a" style="left:981.5px;top:722.6px;width:1.5px;height:1.5px;background:#333"></div>

<!-- timeline -->
<div class="a" style="left:0;top:734.5px;width:1151px;height:1px;background:#353535"></div>
<div class="a" style="left:6.5px;top:740px;width:2px;height:2px;background:#606060"></div><div class="a" style="left:9.5px;top:743px;width:2px;height:2px;background:#606060"></div><div class="a" style="left:6.5px;top:746px;width:2px;height:2px;background:#606060"></div><div class="a" style="left:9.5px;top:749px;width:2px;height:2px;background:#606060"></div><div class="a" style="left:6.5px;top:752px;width:2px;height:2px;background:#606060"></div><div class="a" style="left:9.5px;top:755px;width:2px;height:2px;background:#606060"></div><div class="a" style="left:6.5px;top:758px;width:2px;height:2px;background:#606060"></div><div class="a" style="left:9.5px;top:761px;width:2px;height:2px;background:#606060"></div><div class="a" style="left:6.5px;top:764px;width:2px;height:2px;background:#606060"></div><div class="a" style="left:9.5px;top:767px;width:2px;height:2px;background:#606060"></div>
<div class="a" style="left:0;top:772px;width:1151px;height:1px;background:#3a3a3a"></div>
<div class="a" style="left:0;top:803.5px;width:1151px;height:1px;background:#3a3a3a"></div>
<div class="a" style="left:13px;top:738px;width:838px;height:31.5px;background:#2e2e2e;border-bottom:1px solid #555"></div>
<div class="a" style="left:13px;top:738px;width:6px;height:31px;background:#252525"></div>
<svg style="left:0px;top:0px" width="1151" height="831" viewBox="0 0 1151 831"><path d="M52.5,752V769.5" stroke="#7e7e7e" stroke-width="2"/><text x="58.5" y="747.8" font-family="Liberation Sans" font-size="11" fill="#8a8a8a">2</text><path d="M121.5,752V769.5" stroke="#7e7e7e" stroke-width="2"/><text x="127.44" y="747.8" font-family="Liberation Sans" font-size="11" fill="#8a8a8a">4</text><path d="M190.5,752V769.5" stroke="#7e7e7e" stroke-width="2"/><text x="196.38" y="747.8" font-family="Liberation Sans" font-size="11" fill="#8a8a8a">6</text><path d="M259.5,752V769.5" stroke="#7e7e7e" stroke-width="2"/><text x="265.32" y="747.8" font-family="Liberation Sans" font-size="11" fill="#8a8a8a">8</text><path d="M328.5,752V769.5" stroke="#7e7e7e" stroke-width="2"/><text x="334.26" y="747.8" font-family="Liberation Sans" font-size="11" fill="#8a8a8a">10</text><path d="M397.5,752V769.5" stroke="#7e7e7e" stroke-width="2"/><text x="403.2" y="747.8" font-family="Liberation Sans" font-size="11" fill="#8a8a8a">12</text><path d="M466.5,752V769.5" stroke="#7e7e7e" stroke-width="2"/><text x="472.14" y="747.8" font-family="Liberation Sans" font-size="11" fill="#8a8a8a">14</text><path d="M535.5,752V769.5" stroke="#7e7e7e" stroke-width="2"/><text x="541.08" y="747.8" font-family="Liberation Sans" font-size="11" fill="#8a8a8a">16</text><path d="M604.5,752V769.5" stroke="#7e7e7e" stroke-width="2"/><text x="610.02" y="747.8" font-family="Liberation Sans" font-size="11" fill="#8a8a8a">18</text><path d="M673.5,752V769.5" stroke="#7e7e7e" stroke-width="2"/><text x="678.96" y="747.8" font-family="Liberation Sans" font-size="11" fill="#8a8a8a">20</text><path d="M742.5,752V769.5" stroke="#7e7e7e" stroke-width="2"/><text x="747.9" y="747.8" font-family="Liberation Sans" font-size="11" fill="#8a8a8a">22</text><path d="M811.5,752V769.5" stroke="#7e7e7e" stroke-width="2"/><text x="816.84" y="747.8" font-family="Liberation Sans" font-size="11" fill="#8a8a8a">24</text></svg>
<div class="fld" style="left:853px;top:743.5px;width:69px;height:19.5px"><span style="position:absolute;left:4.5px;top:3.25px">1.00</span></div>
<svg style="left:0px;top:0px" width="1151" height="831" viewBox="0 0 1151 831"><rect x="931" y="748.5" width="2.6" height="13" fill="#d8d8d8"/><path d="M940.5,749.5 V760.5 L933.5,755Z" fill="#d8d8d8"/><path d="M947.5,749.5 V760.5 L940.5,755Z" fill="#d8d8d8"/><rect x="959" y="748.5" width="2.6" height="13" fill="#d8d8d8"/><path d="M973.5,748.5 V761.5 L962,755Z" fill="#d8d8d8"/><rect x="990.4" y="746" width="0.9" height="18" fill="#e02028"/><rect x="989" y="748.5" width="3.4" height="13" fill="#bdbdbd"/><path d="M1002,748.5 V761.5 L993,755Z" fill="#d8d8d8"/><path d="M1029.5,748.5 V761.5 L1016.5,755Z" fill="#d8d8d8"/><path d="M1043.5,748.5 V761.5 L1056.5,755Z" fill="#d8d8d8"/><path d="M1071,748.5 V761.5 L1080,755Z" fill="#d8d8d8"/><rect x="1080.4" y="748.5" width="3.4" height="13" fill="#bdbdbd"/><rect x="1082.6" y="746" width="0.9" height="18" fill="#e02028"/><path d="M1099,748.5 V761.5 L1110.5,755Z" fill="#d8d8d8"/><rect x="1112" y="748.5" width="2.6" height="13" fill="#d8d8d8"/><path d="M1125.5,749.5 V760.5 L1132.5,755Z" fill="#d8d8d8"/><path d="M1132.5,749.5 V760.5 L1139.5,755Z" fill="#d8d8d8"/><rect x="1140.4" y="748.5" width="2.6" height="13" fill="#d8d8d8"/></svg>
<div class="a" style="left:6.5px;top:778px;width:2px;height:2px;background:#606060"></div><div class="a" style="left:9.5px;top:781px;width:2px;height:2px;background:#606060"></div><div class="a" style="left:6.5px;top:784px;width:2px;height:2px;background:#606060"></div><div class="a" style="left:9.5px;top:787px;width:2px;height:2px;background:#606060"></div><div class="a" style="left:6.5px;top:790px;width:2px;height:2px;background:#606060"></div><div class="a" style="left:9.5px;top:793px;width:2px;height:2px;background:#606060"></div><div class="a" style="left:6.5px;top:796px;width:2px;height:2px;background:#606060"></div><div class="a" style="left:9.5px;top:799px;width:2px;height:2px;background:#606060"></div>
<div class="fld" style="left:13.5px;top:776.5px;width:69px;height:24px"><span style="position:absolute;left:4.5px;top:5px">1.00</span></div>
<div class="fld" style="left:86px;top:776.5px;width:68.5px;height:24px"><span style="position:absolute;left:4.5px;top:5px">1.00</span></div>
<div class="a" style="left:157.5px;top:776.5px;width:201px;height:24px;background:#2b2b2b;border:1px solid #252525;border-radius:2px"></div>
<div class="a" style="left:159px;top:780px;width:109px;height:19px;background:#7b7b7b;border-radius:1px"></div>
<div class="a" style="left:164px;top:784px;width:8px;height:12px;border:1px solid #242424;border-top:none;border-left:none"></div>
<div class="a" style="left:164px;top:784px;width:7px;height:11px;border:1px solid #b4b4b4;border-top:none;border-left:none"></div>
<div class="a" style="left:256.5px;top:784px;width:8px;height:12px;border:1px solid #242424;border-top:none;border-left:none"></div>
<div class="a" style="left:256.5px;top:784px;width:7px;height:11px;border:1px solid #b4b4b4;border-top:none;border-left:none"></div>
<div class="t" style="left:176px;top:782.5px;color:#f0f0f0">1</div>
<div class="t" style="left:238px;top:782.5px;color:#f0f0f0">24</div>
<div class="fld" style="left:361px;top:776.5px;width:69px;height:24px"><span style="position:absolute;left:4.5px;top:5px">24.00</span></div>
<div class="fld" style="left:433px;top:776.5px;width:68.5px;height:24px"><span style="position:absolute;left:4.5px;top:5px">48.00</span></div>
<svg style="left:507.4px;top:784.6px" width="10" height="7" viewBox="0 0 10 7"><path d="M0.6,0.6 H9.6 L5.1,5.2Z" fill="#2e2e2e" stroke="#8c8c8c" stroke-width="0.9"/></svg>
<div class="a" style="left:523.5px;top:776.5px;width:102.5px;height:24px;border:1px solid #525252;border-radius:3px;background:#454545"></div>
<div class="t" style="left:528px;top:782.5px">No Anim Layer</div>
<svg style="left:631px;top:784.6px" width="10" height="7" viewBox="0 0 10 7"><path d="M0.6,0.6 H9.6 L5.1,5.2Z" fill="#2e2e2e" stroke="#8c8c8c" stroke-width="0.9"/></svg>
<div class="a" style="left:647px;top:776.5px;width:102px;height:24px;border:1px solid #525252;border-radius:3px;background:#454545"></div>
<div class="t" style="left:651px;top:782.5px">No Character Set</div>
<svg style="left:753px;top:783px" width="18" height="11" viewBox="0 0 18 11"><circle cx="3.8" cy="5.4" r="2.6" fill="none" stroke="#d0d0d0" stroke-width="1.2"/><path d="M6.4,5.4H16.4M13.4,5.4V8.6M16,5.4V8.6" stroke="#d0d0d0" stroke-width="1.2" fill="none"/><path d="M6.4,4H16.6" stroke="#222" stroke-width="0.8"/></svg>
<svg style="left:775px;top:781px" width="15.4" height="16" viewBox="0 0 15.4 16"><rect x="0.5" y="0.5" width="14.4" height="15" fill="#f0f0f0" stroke="#222" stroke-width="0.8"/><rect x="1" y="1" width="13.4" height="3" fill="#4c90e0"/><path d="M2.6,2.5h1M5,2.5h1M7.4,2.5h1" stroke="#fff" stroke-width="1"/><path d="M3,13.4 L12,5.6M3.6,8H12M5.6,5.8V12.8M9,6V13M3,11.4H12" stroke="#e02028" stroke-width="0.9"/></svg>
<div class="a" style="left:802px;top:779px;width:2px;height:2px;background:#606060"></div><div class="a" style="left:805px;top:782px;width:2px;height:2px;background:#606060"></div><div class="a" style="left:802px;top:785px;width:2px;height:2px;background:#606060"></div><div class="a" style="left:805px;top:788px;width:2px;height:2px;background:#606060"></div><div class="a" style="left:802px;top:791px;width:2px;height:2px;background:#606060"></div><div class="a" style="left:805px;top:794px;width:2px;height:2px;background:#606060"></div><div class="a" style="left:802px;top:797px;width:2px;height:2px;background:#606060"></div><div class="a" style="left:805px;top:800px;width:2px;height:2px;background:#606060"></div>
<div class="t" style="left:819.5px;top:782.5px">MEL</div>
<div class="a" style="left:853.5px;top:776.5px;width:210px;height:24px;background:#2b2b2b;border:1px solid #252525;border-radius:3px"></div>
<div class="a" style="left:1066.5px;top:782px;width:2px;height:2px;background:#5e5e5e"></div>
<div class="a" style="left:1069.5px;top:776.5px;width:80.5px;height:24.5px;background:#060606;border:1px solid #1a1a1a"></div>
<div class="a" style="left:6.5px;top:808px;width:2px;height:2px;background:#606060"></div><div class="a" style="left:9.5px;top:811px;width:2px;height:2px;background:#606060"></div><div class="a" style="left:6.5px;top:814px;width:2px;height:2px;background:#606060"></div><div class="a" style="left:9.5px;top:817px;width:2px;height:2px;background:#606060"></div><div class="a" style="left:6.5px;top:820px;width:2px;height:2px;background:#606060"></div><div class="a" style="left:9.5px;top:823px;width:2px;height:2px;background:#606060"></div><div class="a" style="left:6.5px;top:826px;width:2px;height:2px;background:#606060"></div><div class="a" style="left:9.5px;top:829px;width:2px;height:2px;background:#606060"></div>
<div class="a" style="left:13.5px;top:806px;width:1135.5px;height:24px;border:1px solid #353535;border-right-color:#555;border-bottom-color:#555;background:#444"></div>
<div class="t" style="left:26px;top:812px;font-size:10px">Select Tool: select an object</div>
<svg style="left:1134px;top:817px" width="14" height="13" viewBox="0 0 14 13"><path d="M13,2 L2,13 M13,6 L6,13 M13,10 L10,13" stroke="#777" stroke-width="1"/></svg>

</body></html>
